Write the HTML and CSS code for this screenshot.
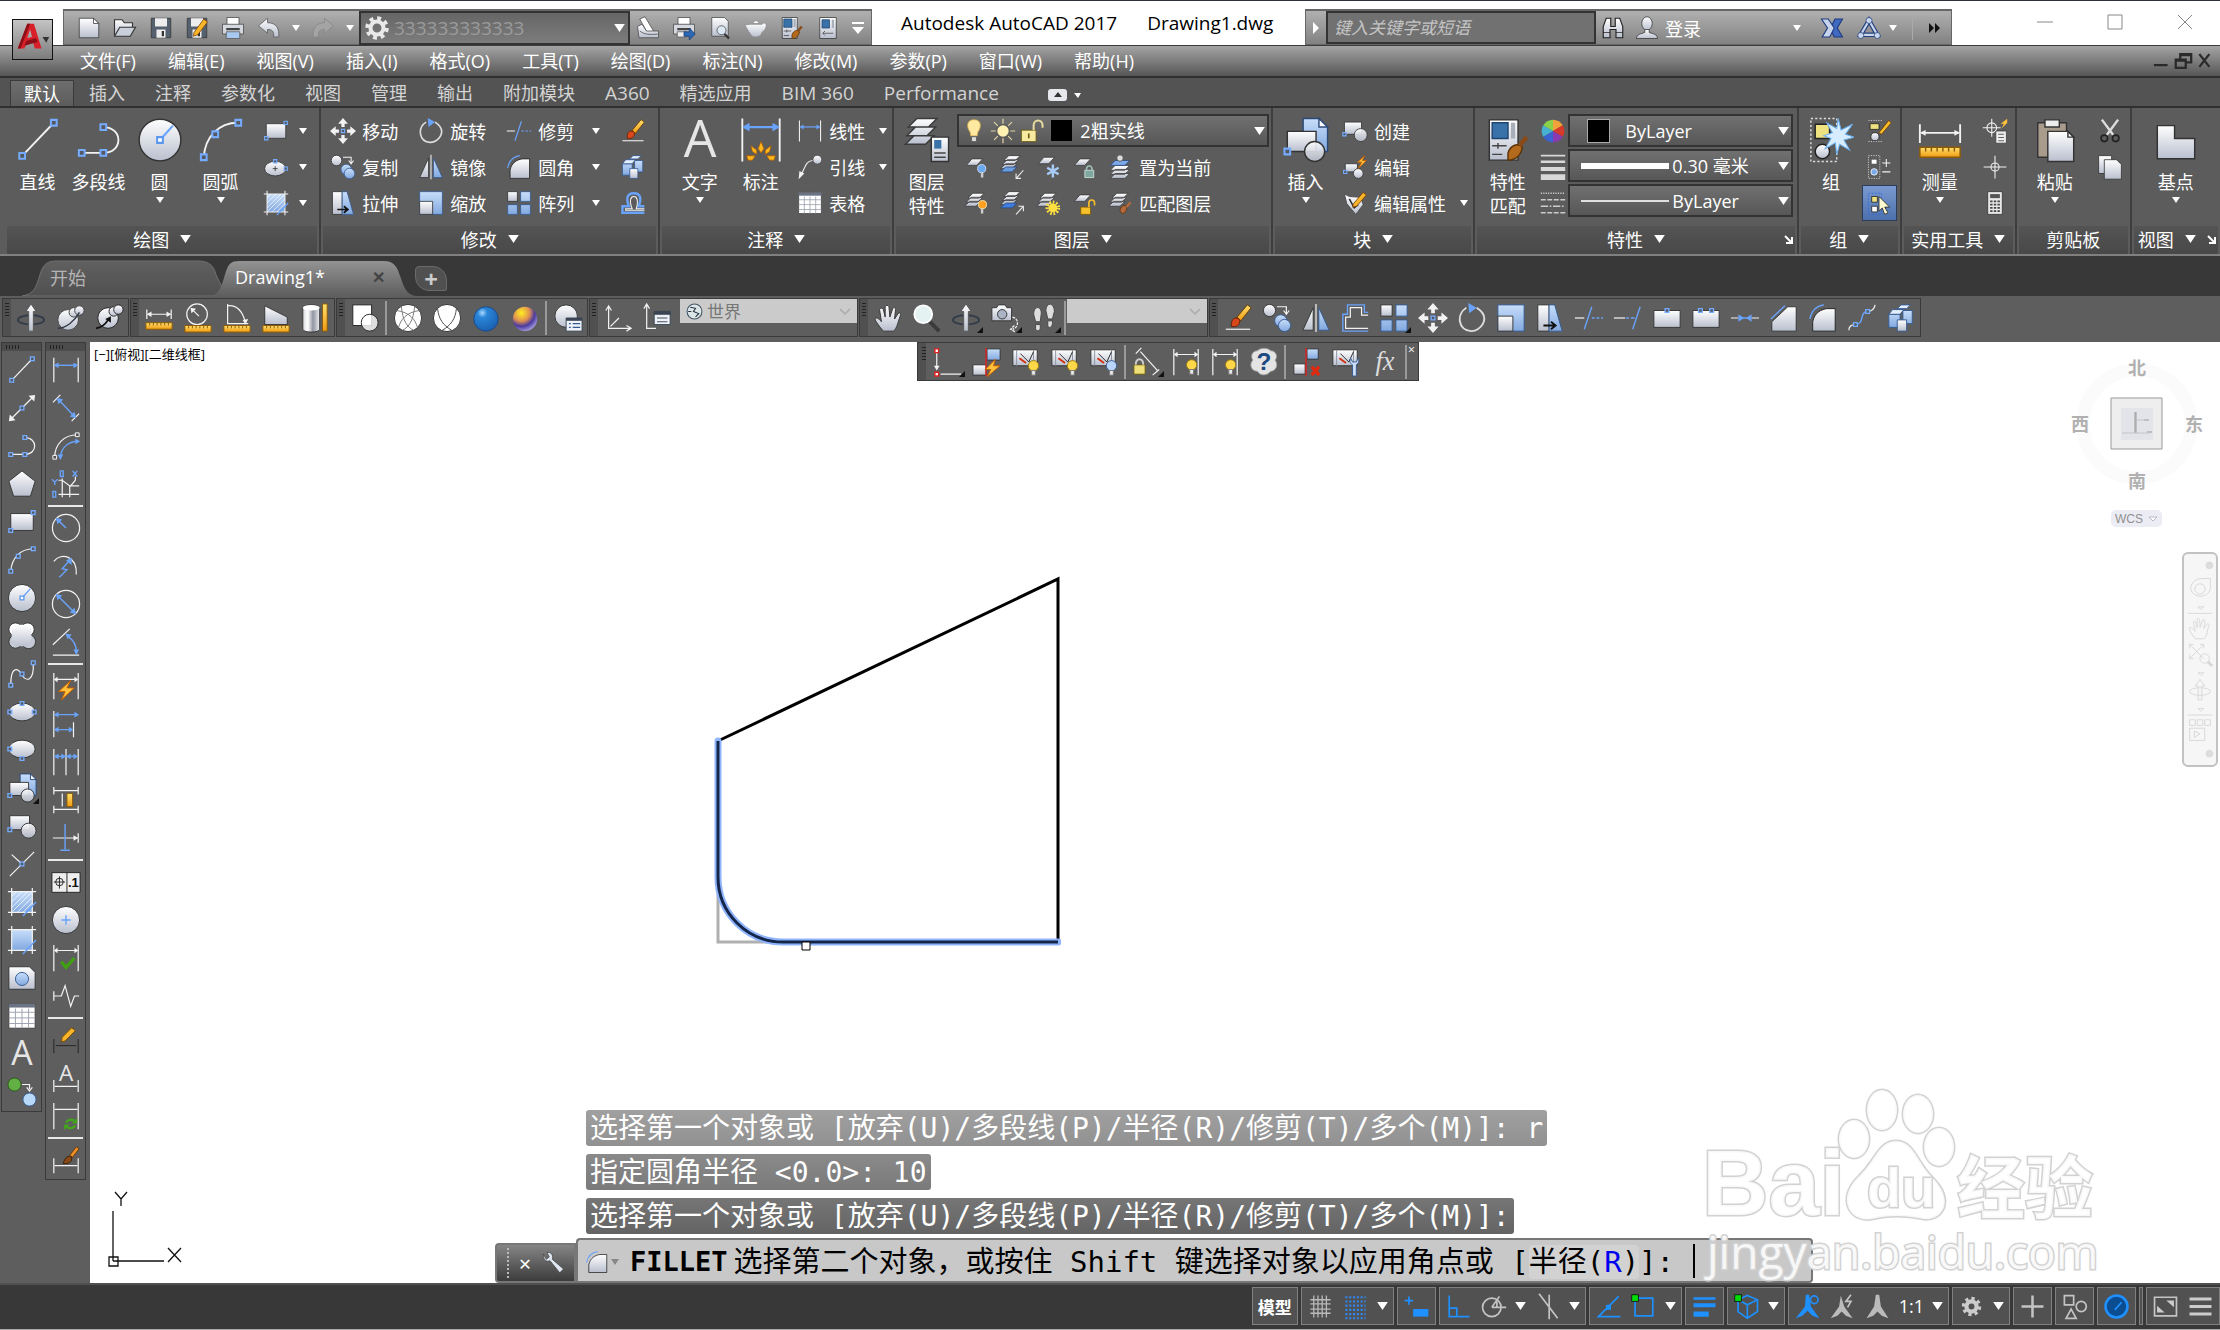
FILE: index.html
```html
<!DOCTYPE html>
<html lang="zh-CN">
<head>
  <meta charset="UTF-8" />
  <meta name="viewport" content="width=device-width, initial-scale=1.0"/>
  <title>Autodesk AutoCAD 2017 - Drawing1.dwg</title>
  <link rel="stylesheet" href="styles.css">
</head>
<body>
  <!-- icon sprite -->
  <svg class="sprite" aria-hidden="true">
    <defs>
      <linearGradient id="gw" x1="0" y1="0" x2="0" y2="1"><stop offset="0" stop-color="#fff"/><stop offset="1" stop-color="#b9bfce"/></linearGradient>
      <linearGradient id="gb" x1="0" y1="0" x2="0" y2="1"><stop offset="0" stop-color="#c8defa"/><stop offset="1" stop-color="#82a9e0"/></linearGradient>
      <linearGradient id="gy" x1="0" y1="0" x2="0" y2="1"><stop offset="0" stop-color="#ffe270"/><stop offset="1" stop-color="#f09a10"/></linearGradient>
      <linearGradient id="gc" x1="0" y1="0" x2="1" y2="0"><stop offset="0" stop-color="#d8dae0"/><stop offset=".3" stop-color="#fff"/><stop offset=".6" stop-color="#8f94a0"/><stop offset="1" stop-color="#f0f0f4"/></linearGradient>
      <radialGradient id="gball" cx=".35" cy=".25" r=".8"><stop offset="0" stop-color="#a8d8ff"/><stop offset=".25" stop-color="#2a86d8"/><stop offset="1" stop-color="#1a5fb0"/></radialGradient>
      <radialGradient id="ggold" cx=".35" cy=".25" r=".85"><stop offset="0" stop-color="#ffee20"/><stop offset=".4" stop-color="#e09050"/><stop offset=".65" stop-color="#4a3aa0"/><stop offset="1" stop-color="#c0b8f0"/></radialGradient>
      <linearGradient id="gtab" x1="0" y1="0" x2="0" y2="1"><stop offset="0" stop-color="#606060"/><stop offset="1" stop-color="#505050"/></linearGradient>
      <linearGradient id="gtabon" x1="0" y1="0" x2="0" y2="1"><stop offset="0" stop-color="#939393"/><stop offset="1" stop-color="#5e5e5e"/></linearGradient>
      <g id="hdb"><path class="w" d="M3 3v26M29 3v26"/><path class="b" d="M5 11h22"/><path class="bf" d="M3 11l5-3v6zM29 11l-5-3v6z"/></g>
      <g id="sheets"><path d="M12 4h14l-6 6H6zM10 9h14l-6 6H4zM8 14h14l-6 6H2z" fill="url(#gw)" stroke="#3a3a3a"/></g>
      <g id="ruler"><path d="M2 21h28v7H2z" fill="url(#gy)" stroke="#8c5a08"/><path d="M6 21v3M10 21v3M14 21v3M18 21v3M22 21v3M26 21v3" stroke="#8c5a08"/></g>
      <g id="bulb"><circle cx="22" cy="19" r="5.5" fill="#ffd84a" stroke="#9a7a10"/><path d="M20 24h4v5h-4z" fill="#e8e8e8" stroke="#777"/></g>
      <g id="cst"><path d="M2 3h26v17H2z" fill="url(#gw)" stroke="#333"/><path d="M6 3v17M24 3v17" stroke="#8a90a0"/><path d="M10 7l9 9 5-11" stroke="#222" fill="none"/><path d="M9 12l7 5" stroke="#d03010" stroke-width="2"/></g>
      <g id="disk"><path d="M3 3h26v26H3z" fill="#56616f" stroke="#333"/><path d="M8 3h16v11H8zM10 18h12v11H10z" fill="#eee"/><path d="M17 20h3v7h-3z" fill="#333"/></g>
      <g id="printer"><path d="M8 2h16v10H8z" fill="#fff" stroke="#444"/><path d="M2 11h28v13H2z" fill="#d5d8df" stroke="#444"/><path d="M7 16h18v3H7z" fill="#444"/></g>
    </defs>

    <symbol id="line" viewBox="0 0 32 32"><path class="w" d="M5 27L27 4"/><path class="p" d="M3 25h4v4H3zM25 2h4v4h-4z"/></symbol>
    <symbol id="xline" viewBox="0 0 32 32"><path class="w" d="M4 28L28 4"/><path class="wf" d="M2 30l1-7 6 6zM30 2l-1 7-6-6z"/><path class="p" d="M14 14h4v4h-4z"/></symbol>
    <symbol id="pline" viewBox="0 0 32 32"><path class="w" d="M5 25h14c14 0 14-18 0-18"/><path class="p" d="M2 23h4v4H2zM17 23h4v4h-4zM17 5h4v4h-4z"/></symbol>
    <symbol id="polygon" viewBox="0 0 32 32"><path d="M16 2l14 11-5 16H7L2 13z" fill="url(#gw)" stroke="#333"/></symbol>
    <symbol id="rect" viewBox="0 0 32 32"><path d="M4 7h24v18H4z" fill="url(#gw)" stroke="#333"/><path class="p" d="M26 4h4v4h-4zM2 23h4v4H2z"/></symbol>
    <symbol id="arc" viewBox="0 0 32 32"><path class="w" d="M4 28C5 14 14 4 28 4"/><path class="p" d="M2 26h4v4H2zM10 10h4v4h-4zM26 2h4v4h-4z"/></symbol>
    <symbol id="circle" viewBox="0 0 32 32"><circle cx="16" cy="16" r="14.5" fill="url(#gw)" stroke="#333"/><path class="b" d="M16 16l9-10"/><path d="M14 14h4v4h-4z" fill="#fff" stroke="#5b97f0" stroke-width="1.4"/></symbol>
    <symbol id="cloud" viewBox="0 0 32 32"><circle cx="9" cy="9" r="7" fill="#fff" stroke="#333"/><circle cx="22" cy="9" r="7" fill="#fff" stroke="#333"/><circle cx="9" cy="22" r="7" fill="#c4c9d6" stroke="#333"/><circle cx="23" cy="22" r="7.500" fill="#c4c9d6" stroke="#333"/><path d="M5 8h21v14H5zM9 4h14v23H9z" fill="url(#gw)"/></symbol>
    <symbol id="spline" viewBox="0 0 32 32"><path class="w" d="M4 28C4 6 12 10 16 17s13 8 12-13"/><path class="p" d="M2 26h4v4H2zM14 14h4v4h-4zM26 2h4v4h-4z"/></symbol>
    <symbol id="ellipse" viewBox="0 0 32 32"><ellipse cx="16" cy="16" rx="14" ry="9.500" fill="url(#gw)" stroke="#333"/><path class="p" d="M1 14h4v4H1zM27 14h4v4h-4zM14 5h4v4h-4z"/></symbol>
    <symbol id="earc" viewBox="0 0 32 32"><ellipse cx="16" cy="15" rx="14" ry="9.500" fill="url(#gw)" stroke="#333"/><path class="p" d="M1 13h4v4H1zM14 23h4v4h-4z"/></symbol>
    <symbol id="ellctr" viewBox="0 0 32 32"><ellipse cx="15" cy="18" rx="13" ry="9" fill="url(#gw)" stroke="#333"/><path d="M15 15v6M12 18h6" stroke="#333"/><path class="p" d="M13 7h4v4h-4zM26 16h4v4h-4z"/></symbol>
    <symbol id="insert" viewBox="0 0 32 32"><path d="M14 1h11l6 6v17H14z" fill="url(#gb)" stroke="#2c4a78"/><path d="M25 1v6h6z" fill="#fff" stroke="#2c4a78"/><path d="M3 10h20v14H3z" fill="url(#gw)" stroke="#333"/><circle cx="22" cy="24" r="7" fill="url(#gw)" fill-opacity=".9" stroke="#333"/><path class="p" d="M1 22h4v4H1z"/></symbol>
    <symbol id="block" viewBox="0 0 32 32"><path d="M3 5h21v15H3z" fill="url(#gw)" stroke="#333"/><circle cx="23" cy="21" r="8" fill="url(#gw)" fill-opacity=".9" stroke="#333"/><path class="p" d="M1 18h4v4H1z"/></symbol>
    <symbol id="point" viewBox="0 0 32 32"><path class="w" d="M3 29L29 3M5 6l11 10"/><path class="p" d="M14 14h4v4h-4z"/></symbol>
    <symbol id="hatch" viewBox="0 0 32 32"><path d="M5 5h22v22H5z" fill="url(#gb)"/><path d="M5 10l5-5M5 16L16 5M5 22L22 5M6 26L26 6M11 27L27 11M17 27l10-10" stroke="#fff" stroke-width=".8"/><path class="w" d="M5 1v30M27 1v30M1 5h30M1 27h30"/><path class="b" d="M17 31l14-15"/></symbol>
    <symbol id="gradient" viewBox="0 0 32 32"><path d="M5 5h22v22H5z" fill="url(#gb)"/><path class="w" d="M5 1v30M27 1v30M1 5h30M1 27h30"/><path class="b" d="M17 31l14-15"/></symbol>
    <symbol id="region" viewBox="0 0 32 32"><path d="M2 4h22l6 6v18H2z" fill="url(#gw)" stroke="#333"/><circle cx="16" cy="17" r="7" fill="url(#gb)" stroke="#345a90"/></symbol>
    <symbol id="table" viewBox="0 0 32 32"><path d="M2 3h28v26H2z" fill="#fff" stroke="#444"/><path d="M2 3h28v4H2z" fill="#6b7484"/><path d="M2 12h28M2 18h28M2 24h28M9 8v21M16 8v21M23 8v21" stroke="#9aa0ac"/></symbol>
    <symbol id="addsel" viewBox="0 0 32 32"><circle cx="8" cy="8" r="7" fill="#62b044" stroke="#275c14"/><circle cx="24" cy="24" r="7" fill="#b8d8f8" stroke="#345a90"/><path class="w" d="M16 8h8v5M21 11l3 4 3-4"/></symbol>

    <symbol id="dimlin" viewBox="0 0 32 32"><use href="#hdb"/></symbol>
    <symbol id="dimali" viewBox="0 0 32 32"><path class="w" d="M2 10l8-8M22 30l8-8"/><path class="b" d="M8 7l17 18"/><path class="bf" d="M6 5l7 2-5 5zM27 27l-7-2 5-5z"/></symbol>
    <symbol id="dimarc" viewBox="0 0 32 32"><path class="w" d="M4 28C4 14 14 4 28 4"/><path class="b" d="M10 28c1-10 8-16 18-17"/><path class="bf" d="M10 31l-3-6h6zM31 11l-5-3v6z"/><path d="M2 26h4v4H2zM26 2h4v4h-4z" fill="#555" stroke="#fff"/></symbol>
    <symbol id="dimrad" viewBox="0 0 32 32"><circle class="w" cx="16" cy="16" r="14.5"/><path class="b" d="M8 8l8 8"/><path class="bf" d="M5 5l7 2-5 5z"/></symbol>
    <symbol id="dimjog" viewBox="0 0 32 32"><path class="w" d="M3 11c8-10 25-6 24 14"/><path class="b" d="M9 28l8-8-5-1 7-8"/><path class="bf" d="M22 7l0 8-6-5z"/></symbol>
    <symbol id="dimdia" viewBox="0 0 32 32"><circle class="w" cx="16" cy="16" r="14.5"/><path class="b" d="M8 8l16 16"/><path class="bf" d="M5 5l7 2-5 5zM27 27l-7-2 5-5z"/></symbol>
    <symbol id="dimang" viewBox="0 0 32 32"><path class="w" d="M2 19L20 2M2 30h28"/><path class="b" d="M18 10c6 4 9 9 9 16"/><path class="bf" d="M15 7l7 1-4 5zM27 30l-3-6h6z"/></symbol>
    <symbol id="qdim" viewBox="0 0 32 32"><path class="w" d="M3 2v28M29 2v28M5 9h22"/><path class="wf" d="M3 9l4-3v6zM29 9l-4-3v6z"/><path d="M21 10L8 22h7l-4 9 14-13h-8z" fill="#ffc13a" stroke="#c25a00"/></symbol>
    <symbol id="dimbase" viewBox="0 0 32 32"><path class="w" d="M3 2v28M24 14v16"/><path class="b" d="M5 6h22M5 22h16"/><path class="bf" d="M3 6l5-3v6zM30 6l-5-3v6zM3 22l5-3v6zM24 22l-5-3v6z"/></symbol>
    <symbol id="dimcont" viewBox="0 0 32 32"><path class="w" d="M3 2v28M16 2v28M29 2v28"/><path class="b" d="M5 10h22"/><path class="bf" d="M3 10l5-3v6zM16 10l-5-3v6zM16 10l5-3v6zM29 10l-5-3v6z"/></symbol>
    <symbol id="dimspace" viewBox="0 0 32 32"><path class="w" d="M3 2v8M29 2v8M3 22v8M29 22v8M3 6h26M3 26h26M12 9v14"/><path d="M17 9h6v14h-6z" fill="url(#gy)" stroke="#8c5a08"/></symbol>
    <symbol id="dimbreak" viewBox="0 0 32 32"><path class="w" d="M2 16h26M29 11v10"/><path class="wf" d="M29 16l-5-3v6z"/><path class="b" d="M15 1v27M10 29h10"/></symbol>
    <symbol id="center" viewBox="0 0 32 32"><circle cx="16" cy="16" r="14.5" fill="url(#gw)" stroke="#333"/><path class="b" d="M16 11v10M11 16h10"/></symbol>
    <symbol id="inspect" viewBox="0 0 32 32"><path class="w" d="M3 2v28M29 2v28M5 8h22"/><path class="wf" d="M3 8l4-3v6zM29 8l-4-3v6z"/><path d="M11 20l5 6 9-10" fill="none" stroke="#3fa012" stroke-width="3.500"/></symbol>
    <symbol id="jogline" viewBox="0 0 32 32"><path class="w" d="M3 11v10M3 16h8l4-11 6 22 4-11h5"/></symbol>
    <symbol id="dimedit" viewBox="0 0 32 32"><path d="M3 15v15M29 15v15M5 22h22" stroke="#222"/><path d="M12 13L22 3l4 3-11 11-4 1z" fill="#f7b62a" stroke="#7a4a00"/></symbol>
    <symbol id="dimupd" viewBox="0 0 32 32"><path class="w" d="M3 2v28M29 2v28M4 9h24"/><path d="M16 23a6 5 0 0 1 9-2M26 26a6 5 0 0 1-9 2" fill="none" stroke="#43a51c" stroke-width="2.500"/><path d="M28 18v6h-6zM14 31v-6h6z" fill="#43a51c"/></symbol>
    <symbol id="dimsty" viewBox="0 0 32 32"><path class="w" d="M3 14v16M29 14v16M4 22h24"/><path d="M20 11l7-9 3 2-7 9z" fill="#f0902a" stroke="#6a3a00"/><path d="M13 20c2-8 6-9 9-7 1 5-3 7-9 7z" fill="#8a4a18" stroke="#3a2008"/></symbol>

    <symbol id="orbit" viewBox="0 0 32 32"><ellipse cx="16" cy="18" rx="14" ry="5" fill="none" stroke="#343c4a" stroke-width="2"/><path d="M13.500 30V9h-3L16 1l5.500 8h-3v21z" fill="url(#gw)" stroke="#555"/></symbol>
    <symbol id="fly" viewBox="0 0 32 32"><circle cx="14" cy="18" r="11" fill="url(#gw)" stroke="#444"/><circle cx="20" cy="10" r="5" fill="url(#gw)" stroke="#444"/><circle cx="26" cy="8" r="5" fill="url(#gw)" stroke="#444"/><path d="M3 27c9 0 18-8 23-17" fill="none" stroke="#343c4a" stroke-width="1.500"/></symbol>
    <symbol id="fly2" viewBox="0 0 32 32"><circle cx="15" cy="16" r="11" fill="url(#gw)" stroke="#222"/><circle cx="21" cy="9" r="5" fill="url(#gw)" stroke="#222"/><circle cx="26" cy="7" r="5" fill="url(#gw)" stroke="#222"/><path d="M2 27c7-1 10-4 13-9" fill="none" stroke="#111" stroke-width="2"/><path d="M18 14v7l-6-4z" fill="#111"/></symbol>
    <symbol id="mdist" viewBox="0 0 32 32"><path class="w" d="M3 7v10M29 7v10M4 12h24"/><path class="wf" d="M3 12l5-3v6zM29 12l-5-3v6z"/><use href="#ruler"/></symbol>
    <symbol id="mrad" viewBox="0 0 32 32"><circle class="w" cx="15" cy="12" r="11"/><path class="w" d="M10 7l7 7"/><path class="wf" d="M8 5l6 1-5 5z"/><use href="#ruler" y="3"/></symbol>
    <symbol id="mang" viewBox="0 0 32 32"><path class="w" d="M6 1v21h22M6 3c10-1 16 6 19 18"/><path class="wf" d="M25 23l-3-5 6-1z"/><use href="#ruler" y="3"/></symbol>
    <symbol id="marea" viewBox="0 0 32 32"><path d="M4 3l24 12v8H4z" fill="url(#gw)" stroke="#333"/><use href="#ruler" y="3"/></symbol>
    <symbol id="mvol" viewBox="0 0 32 32"><path d="M3 5c0-4 18-4 18 0v23c0 4-18 4-18 0z" fill="url(#gc)" stroke="#333"/><ellipse cx="12" cy="5" rx="9" ry="3" fill="#fff"/><path d="M24 1h5v29h-5z" fill="url(#gy)" stroke="#8c5a08"/></symbol>
    <symbol id="wire2d" viewBox="0 0 32 32"><path d="M3 2h20v22H3z" fill="#fff" stroke="#222"/><circle cx="21" cy="21" r="9" fill="#fff" fill-opacity=".8" stroke="#222"/></symbol>
    <symbol id="wire" viewBox="0 0 32 32"><circle cx="16" cy="16" r="14.500" fill="#fff" stroke="#333"/><path d="M4 8c14 2 20 10 22 18M28 8C14 10 8 18 6 26M9 4c1 14 6 22 13 25M23 4c-1 14-6 22-13 25" fill="none" stroke="#777"/></symbol>
    <symbol id="hidden" viewBox="0 0 32 32"><circle cx="16" cy="16" r="14.500" fill="#fff" stroke="#333"/><path d="M6 6c1 11 6 18 15 23M26 6c-1 11-6 18-15 23" fill="none" stroke="#444"/></symbol>
    <symbol id="real" viewBox="0 0 32 32"><circle cx="16" cy="17" r="13" fill="url(#gball)" stroke="#164a8c"/></symbol>
    <symbol id="concept" viewBox="0 0 32 32"><circle cx="16" cy="17" r="13" fill="url(#ggold)"/></symbol>
    <symbol id="vsman" viewBox="0 0 32 32"><circle cx="14" cy="14" r="12" fill="url(#gw)" stroke="#333"/><path d="M14 16h17v14H14z" fill="#eef2f8" stroke="#3a4454"/><path d="M14 16h17v3H14z" fill="#3a4454"/><path d="M17 22h2M17 26h2M21 22h8M21 26h8" stroke="#345a90" stroke-width="1.500"/></symbol>
    <symbol id="ucs" viewBox="0 0 32 32"><path class="w" d="M6 4v23h23M3 8l3-5 3 5M25 24l5 3-5 3"/><path d="M8 25l9-9" class="w"/></symbol>
    <symbol id="ucsdlg" viewBox="0 0 32 32"><path class="w" d="M5 2v25h10M2 6l3-5 3 5"/><path d="M13 9h17v14H13z" fill="#eef2f8" stroke="#3a4454"/><path d="M13 9h17v3H13zM16 16h11M16 20h11" fill="#3a4454" stroke="#3a4454"/></symbol>
    <symbol id="hand" viewBox="0 0 32 32"><path d="M11 30C6 24 3 20 2 17c1-2 4-1 7 3L7 7c1-2 3-2 4 0l2 8V4c1-2 3-2 4 0l1 11 3-9c1-2 3-1 3 1l-1 10 4-6c2-1 3 0 2 3-3 8-3 12-7 16z" fill="url(#gw)" stroke="#333"/></symbol>
    <symbol id="zoom" viewBox="0 0 32 32"><path d="M18 19l11 11" stroke="#3a3a3a" stroke-width="4"/><circle cx="12" cy="12" r="9.500" fill="#e4f2f2" stroke="#fff" stroke-width="2"/></symbol>
    <symbol id="camera" viewBox="0 0 32 32"><path d="M2 5h5l2-3h7l2 3h5v14H2z" fill="url(#gw)" stroke="#333"/><circle cx="13" cy="12" r="5" fill="#aab4c4" stroke="#333"/><path class="w" d="M24 15c8 2 6 12 0 13M26 24l-4 4 5 3" stroke-dasharray="3 1"/></symbol>
    <symbol id="foot" viewBox="0 0 32 32"><path d="M5 12c0-10 9-9 8 0l-1 8H7zM7 23h5v4c-1 4-5 3-5 0zM18 8c0-9 9-9 9 1l-2 8h-5zM20 19h5c1 8-5 9-5 4z" fill="#ddd" stroke="#444"/></symbol>
    <symbol id="erase" viewBox="0 0 32 32"><path class="w" d="M3 28h26"/><path d="M15 15L26 2l4 3-11 14z" fill="url(#gy)" stroke="#6a3a00"/><path d="M9 25c-1-9 5-11 9-7 0 6-4 8-9 7z" fill="#d8481a" stroke="#6a2000"/></symbol>
    <symbol id="copy" viewBox="0 0 32 32"><circle cx="8" cy="8" r="6.500" fill="url(#gw)" stroke="#333"/><circle cx="20" cy="19" r="6.500" fill="url(#gb)" stroke="#345a90"/><circle cx="24" cy="24" r="6.500" fill="url(#gb)" stroke="#345a90"/><path class="w" d="M16 4h10v7M23 8l3 4 3-4"/></symbol>
    <symbol id="mirror" viewBox="0 0 32 32"><path d="M13 5v24H2z" fill="url(#gw)" stroke="#333"/><path d="M19 5v24h11z" fill="url(#gb)" stroke="#345a90"/><path class="w" d="M16 1v30"/></symbol>
    <symbol id="offset" viewBox="0 0 32 32"><path class="b" d="M30 10h-4V2H8v10H3v18h27"/><path class="w" d="M30 13h-7V5H11v10H6v12h24"/></symbol>
    <symbol id="offarc" viewBox="0 0 32 32"><path d="M30 28H3v-8h8c-4-10-2-16 6-16s10 6 6 16h7" fill="none" stroke="#69a3fa" stroke-width="3"/><path class="w" d="M30 25H7v-2h8c-4-10-2-15 2-15s6 5 3 15h10"/></symbol>
    <symbol id="array" viewBox="0 0 32 32"><path d="M2 2h12v12H2z" fill="url(#gw)" stroke="#333"/><path d="M18 2h12v12H18zM2 18h12v12H2zM18 18h12v12H18z" fill="url(#gb)" stroke="#345a90"/></symbol>
    <symbol id="move" viewBox="0 0 32 32"><path class="wf" d="M16 0l6 7h-4v4h-4V7h-4zM16 32l6-7h-4v-4h-4v4h-4zM0 16l7-6v4h4v4H7v4zM32 16l-7-6v4h-4v4h4v4z"/><path class="p" d="M14 14h4v4h-4z"/></symbol>
    <symbol id="rotate" viewBox="0 0 32 32"><path d="M21 5c17 11 3 26-6 25C1 29-1 12 10 5" fill="none" stroke="#ddd" stroke-width="2"/><path class="bf" d="M12 0l9 5-8 6z"/></symbol>
    <symbol id="scale" viewBox="0 0 32 32"><path d="M2 2h28v28H2z" fill="url(#gb)" stroke="#345a90"/><path d="M2 14h16v16H2z" fill="url(#gw)" stroke="#333"/></symbol>
    <symbol id="stretch" viewBox="0 0 32 32"><path d="M3 2h12v28H3z" fill="url(#gw)" stroke="#333"/><path d="M15 2h6l8 28H15z" fill="url(#gb)" stroke="#345a90"/><path d="M9 24h12M17 20l5 4-5 4" fill="none" stroke="#111" stroke-width="2"/></symbol>
    <symbol id="trim" viewBox="0 0 32 32"><path class="w" d="M1 16h10"/><path class="b" d="M11 28l8-24M19 16h3M24 16h3M29 16h2"/></symbol>
    <symbol id="extend" viewBox="0 0 32 32"><path class="w" d="M1 16h12"/><path class="b" d="M21 28l8-24M14 16h3M19 16h4"/></symbol>
    <symbol id="breakpt" viewBox="0 0 32 32"><path d="M2 8h28v18H2z" fill="url(#gw)" stroke="#333"/><path class="p" d="M14 6h4v4h-4z"/></symbol>
    <symbol id="break" viewBox="0 0 32 32"><path d="M2 8h28v18H2z" fill="url(#gw)" stroke="#333"/><path class="p" d="M8 6h4v4H8zM20 6h4v4h-4z"/></symbol>
    <symbol id="join" viewBox="0 0 32 32"><path class="w" d="M1 16h8M23 16h8"/><path class="b" d="M11 16h10"/><path class="bf" d="M15 16l-6-4v8zM17 16l6-4v8z"/></symbol>
    <symbol id="chamfer" viewBox="0 0 32 32"><path d="M3 30V20L20 4h9v26z" fill="url(#gw)" stroke="#333"/><path class="b" d="M2 17L17 3"/></symbol>
    <symbol id="fillet" viewBox="0 0 32 32"><path d="M5 30V20C7 10 14 7 20 6h9v24z" fill="url(#gw)" stroke="#222"/><path class="b" d="M2 17C4 7 10 3 17 2"/></symbol>
    <symbol id="blend" viewBox="0 0 32 32"><path class="w" d="M2 29c0-4 3-6 7-6M22 9c4 0 7-2 8-7"/><path class="b" d="M9 23c10 0 4-14 13-14"/><path class="p" d="M7 21h4v4H7zM20 7h4v4h-4z"/></symbol>
    <symbol id="explode" viewBox="0 0 32 32"><path d="M3 12h12v14H3zM18 8h10v14H18z" fill="url(#gb)" stroke="#345a90"/><path d="M3 12l4-5h12l-4 5zM12 6l4-4h10l-4 4z" fill="#e4eefc" stroke="#345a90"/><path d="M12 18h10v12H12z" fill="url(#gw)" stroke="#345a90"/></symbol>

    <symbol id="geo" viewBox="0 0 32 32"><path class="w" d="M4 5v18M8 29h22"/><path class="wf" d="M4 25l-3-5h6z"/><path d="M2 2h4v4H2zM2 27h4v4H2z" fill="#fff" stroke="#e02020" stroke-width="1.500"/></symbol>
    <symbol id="autoc" viewBox="0 0 32 32"><path d="M16 2h14v12H16z" fill="url(#gb)" stroke="#333"/><path d="M1 19h14v11H1z" fill="url(#gw)" stroke="#333"/><path d="M15 1v30" stroke="#e02020" stroke-width="1.500"/><path d="M25 13L14 24h6l-4 8 14-12h-7z" fill="#ffc13a" stroke="#c25a00"/></symbol>
    <symbol id="cshow" viewBox="0 0 32 32"><use href="#cst"/><use href="#bulb" x="2" y="1"/></symbol>
    <symbol id="chide" viewBox="0 0 32 32"><use href="#cst"/><circle cx="24" cy="20" r="5.500" fill="#b8d4f8" stroke="#3a5a90"/><path d="M22 25h4v5h-4z" fill="#e8e8e8" stroke="#777"/></symbol>
    <symbol id="dlock" viewBox="0 0 32 32"><path class="w" d="M4 7l6-6M9 5l18 20M22 30l7-6"/><path d="M2 19h12v10H2z" fill="#efe07a" stroke="#6a5a10"/><path d="M4 19c0-8 8-8 8 0" fill="none" stroke="#ccc" stroke-width="2"/></symbol>
    <symbol id="dshow" viewBox="0 0 32 32"><path class="w" d="M3 2v28M29 2v28M5 8h22"/><path class="wf" d="M3 8l4-3v6zM29 8l-4-3v6z"/><use href="#bulb"/></symbol>
    <symbol id="delc" viewBox="0 0 32 32"><path d="M16 2h12v11H16z" fill="url(#gb)" stroke="#333"/><path d="M2 18h12v11H2z" fill="url(#gw)" stroke="#333"/><path d="M15 1v30" stroke="#e02020" stroke-width="1.500"/><path d="M21 21l8 9M29 21l-8 9" stroke="#e02a10" stroke-width="3.500"/></symbol>
    <symbol id="cset" viewBox="0 0 32 32"><use href="#cst"/><path d="M21 12c-2 4 0 6 2 7v12h4V19c3-2 3-5 2-7l-2 4h-4z" fill="#cfe0fa" stroke="#345a90"/></symbol>

    <symbol id="new" viewBox="0 0 32 32"><path d="M3 3h19l7 7v19H3z" fill="url(#gw)" stroke="#333"/><path d="M22 3v7h7z" fill="#fff" stroke="#333"/></symbol>
    <symbol id="open" viewBox="0 0 32 32"><path d="M2 26V5h10l3 4h11v6" fill="url(#gw)" stroke="#333" stroke-width="1.500"/><path d="M2 27l7-12h21l-7 12z" fill="#c9d0dc" stroke="#333" stroke-width="1.500"/></symbol>
    <symbol id="save" viewBox="0 0 32 32"><use href="#disk"/></symbol>
    <symbol id="saveas" viewBox="0 0 32 32"><use href="#disk"/><path d="M12 22L25 4l5 4-13 17-6 2z" fill="#f7b62a" stroke="#7a3a00"/></symbol>
    <symbol id="print" viewBox="0 0 32 32"><use href="#printer"/><path d="M7 21h18v9H7z" fill="#a9c8f0" stroke="#555"/></symbol>
    <symbol id="undo" viewBox="0 0 32 32"><path d="M2 13L14 3v6c12 0 16 8 15 19h-7c1-8-2-10-8-10v5z" fill="url(#gw)" stroke="#555"/></symbol>
    <symbol id="redo" viewBox="0 0 32 32"><path d="M30 13L18 3v6C6 9 2 17 3 28h7c-1-8 2-10 8-10v5z" fill="#a4a4a4" stroke="#848484"/></symbol>
    <symbol id="gear" viewBox="0 0 32 32"><circle cx="16" cy="16" r="12" fill="none" stroke="#e8e8e8" stroke-width="5" stroke-dasharray="4.700 4.700"/><circle cx="16" cy="16" r="8" fill="none" stroke="#e8e8e8" stroke-width="5"/></symbol>
    <symbol id="batch" viewBox="0 0 32 32"><path d="M5 4l7-3 12 20-8 3z" fill="#fff" stroke="#444"/><path d="M2 14l6-3 6 9h16v9H4z" fill="url(#gw)" stroke="#444"/><path d="M5 20c6 5 14 5 24 4" fill="none" stroke="#444"/></symbol>
    <symbol id="plot" viewBox="0 0 32 32"><use href="#printer"/><path d="M7 21h12v7H7z" fill="#eee" stroke="#555"/><path d="M16 21h7v-5l8 8-8 8v-5h-7z" fill="#2c68b4" stroke="#173c70"/></symbol>
    <symbol id="preview" viewBox="0 0 32 32"><path d="M5 2h17l5 5v20H5z" fill="url(#gw)" stroke="#444"/><path d="M22 24l6 6" stroke="#333" stroke-width="3"/><circle cx="18" cy="19" r="6" fill="#dce8f4" stroke="#444"/></symbol>
    <symbol id="teapot" viewBox="0 0 32 32"><path d="M8 11h16c4-4 8 0 4 7l-4 4c-2 8-14 8-16 1C5 20 4 16 1 12z" fill="url(#gw)" stroke="#888"/><path d="M12 10c1-5 7-5 8 0z" fill="#fff" stroke="#888"/></symbol>
    <symbol id="props" viewBox="0 0 32 32"><path d="M3 2h20v28H3z" fill="url(#gw)" stroke="#333"/><path d="M5 4h11v11H5z" fill="#3972a8" stroke="#1f4470"/><path d="M18 4h3v11h-3z" fill="#a9afba"/><path d="M5 20h10M5 26h7M9 18v4" stroke="#444"/><path d="M16 25c2-6 7-7 10-4-1 6-5 9-10 9z" fill="#b46a1c" stroke="#5a3208"/><path d="M24 20l5-6" stroke="#8a4a18" stroke-width="3"/></symbol>
    <symbol id="palette" viewBox="0 0 32 32"><path d="M5 2h22v28H5z" fill="url(#gw)" stroke="#333"/><path d="M8 5h10v11H8z" fill="#3972a8" stroke="#1f4470"/><path d="M21 5h3v11h-3z" fill="#a9afba"/><path d="M9 23h14M12 20l-3 3 3 3" stroke="#444" fill="none"/></symbol>
    <symbol id="down" viewBox="0 0 8 6"><path d="M0 0h8L4 6z" fill="currentColor"/></symbol>
    <symbol id="binoc" viewBox="0 0 32 32"><path d="M3 29V14L7 3h6v11h6V3h6l4 11v15h-9V18h-8v11z" fill="url(#gw)" stroke="#222" stroke-width="1.500"/><path d="M3 22h9M20 22h9" stroke="#222"/></symbol>
    <symbol id="user" viewBox="0 0 32 32"><ellipse cx="16" cy="10" rx="7" ry="9" fill="url(#gw)" stroke="#333"/><path d="M2 30c0-6 6-6 11-8v-4h6v4c5 2 11 2 11 8z" fill="url(#gw)" stroke="#333"/></symbol>
    <symbol id="exch" viewBox="0 0 32 32"><path d="M16 12l4-8h10l-7 12 7 12H19l-4-8z" fill="#3f6ac0" stroke="#1f3a80" stroke-width="1.500"/><path d="M2 4h9l8 12-6 12H3l7-12z" fill="#c8d4ec" stroke="#1f3a80" stroke-width="1.500"/></symbol>
    <symbol id="a360" viewBox="0 0 32 32"><path d="M16 6L5 25h22z" fill="none" stroke="#25407c" stroke-width="6"/><path d="M16 6L5 25h22z" fill="none" stroke="#c8d6ee" stroke-width="3"/><circle cx="16" cy="6" r="4" fill="#c8d6ee" stroke="#25407c"/><circle cx="5" cy="26" r="4" fill="#c8d6ee" stroke="#25407c"/><circle cx="27" cy="26" r="4" fill="#c8d6ee" stroke="#25407c"/></symbol>

    <symbol id="dimbig" viewBox="0 0 32 32"><path class="w" d="M3 1v30M29 1v30"/><path class="b" d="M4 7h24"/><path class="bf" d="M3 7l5-3v6zM29 7l-5-3v6z"/><path d="M16 17l2 5-2 3-2-3zM9 20l4 3v3l-3-2zM23 20l-4 3v3l3-2zM6 27h6l-2 3H7zM26 27h-6l2 3h3z" fill="#ffb81c" stroke="#b05a00" stroke-width=".5"/></symbol>
    <symbol id="leader" viewBox="0 0 32 32"><circle cx="25" cy="7" r="5.500" fill="url(#gw)" stroke="#444"/><path class="w" d="M19 8c-8 1-8 6-14 18"/><path class="wf" d="M2 31l1-10 6 3z"/></symbol>
    <symbol id="layprop" viewBox="0 0 32 32"><path d="M9 1h14l-6 6H3zM8 7h14l-6 6H2zM7 13h14l-6 6H1z" fill="url(#gw)" stroke="#3a3a3a"/><path d="M19 14h12v17H19z" fill="url(#gw)" stroke="#333"/><path d="M21 16h5v6h-5z" fill="#3972a8"/><path d="M21 25h8M21 28h8" stroke="#444"/></symbol>
    <symbol id="layoff" viewBox="0 0 32 32"><path d="M11 6h13l-7 8H4z" fill="url(#gw)" stroke="#3a3a3a"/><circle cx="23" cy="18" r="5" fill="#6aa8f0" stroke="#dbe8fa"/><path d="M22 23h3v6h-3z" fill="#ccc"/></symbol>
    <symbol id="layiso" viewBox="0 0 32 32"><use href="#sheets" y="-2"/><path d="M8 16h14l-6 6H2z" fill="#6a9ce0" stroke="#2c4a78"/><path class="w" d="M30 20l-8 9M21 24v6h6"/></symbol>
    <symbol id="layuniso" viewBox="0 0 32 32"><use href="#sheets" y="-2"/><path d="M8 16h14l-6 6H2z" fill="#3f7ee0" stroke="#2c4a78"/><path class="w" d="M21 30l8-9M24 20h6v6"/></symbol>
    <symbol id="layfrz" viewBox="0 0 32 32"><path d="M11 4h13l-7 8H4z" fill="url(#gw)" stroke="#3a3a3a"/><path d="M22 13v16M15 17l14 8M29 17l-14 8" stroke="#a8ccf8" stroke-width="3"/></symbol>
    <symbol id="laylck" viewBox="0 0 32 32"><path d="M11 6h13l-7 8H4z" fill="url(#gw)" stroke="#3a3a3a"/><path d="M17 20h11v9H17z" fill="#7ea8a0" stroke="#d8e8e4"/><path d="M19 20c0-7 7-7 7 0" fill="none" stroke="#9cc0b8" stroke-width="2"/></symbol>
    <symbol id="laycur" viewBox="0 0 32 32"><path d="M10 24h18l-6 6H4zM10 19h18l-6 6H4zM10 14h18l-6 6H4z" fill="url(#gw)" stroke="#3a3a3a"/><path d="M10 8h18l-6 6H4z" fill="#7aa8e8" stroke="#2c4a78"/><circle cx="16" cy="5" r="4" fill="#ddd" stroke="#444"/></symbol>
    <symbol id="layon" viewBox="0 0 32 32"><use href="#sheets"/><circle cx="24" cy="18" r="5" fill="#ffa020" stroke="#fff0c0"/><path d="M22 23h3v6h-3z" fill="#ccc"/></symbol>
    <symbol id="laythw" viewBox="0 0 32 32"><use href="#sheets"/><circle cx="22" cy="22" r="7" fill="none" stroke="#ffe040" stroke-width="4" stroke-dasharray="2 2"/><circle cx="22" cy="22" r="5.500" fill="#ffe040"/></symbol>
    <symbol id="layunl" viewBox="0 0 32 32"><path d="M11 6h13l-7 8H4z" fill="url(#gw)" stroke="#3a3a3a"/><path d="M12 21h12v9H12z" fill="#f7c02a" stroke="#7a5a00"/><path d="M22 21v-5c0-5 7-5 7 0v3" fill="none" stroke="#f7c02a" stroke-width="2"/></symbol>
    <symbol id="laymat" viewBox="0 0 32 32"><use href="#sheets"/><path d="M16 26c0-6 5-8 8-6 1 5-2 9-5 9z" fill="#b46a3c" stroke="#5a3208"/><path d="M24 21l5-6" stroke="#b46a3c" stroke-width="3"/></symbol>
    <symbol id="bulbon" viewBox="0 0 32 32"><path d="M16 2c10 0 9 10 5 15l-1 5h-8l-1-5C7 12 6 2 16 2z" fill="#ffe9a0" stroke="#caa24a"/><path d="M13 23h6v6h-6z" fill="#ddd" stroke="#555"/></symbol>
    <symbol id="sun" viewBox="0 0 32 32"><path d="M16 1v30M1 16h30M5 5l22 22M27 5L5 27" stroke="#e0d4a8" stroke-width="1.500"/><circle cx="16" cy="16" r="9" fill="#5a5a5a"/><circle cx="16" cy="16" r="7" fill="#fdf0b0"/></symbol>
    <symbol id="unlock" viewBox="0 0 32 32"><path d="M3 15h18v14H3z" fill="#f5eaa0" stroke="#6a5a10"/><path d="M12 19v6" stroke="#6a5a10" stroke-width="2"/><path d="M18 15V9c0-8 11-8 11 0v3" fill="none" stroke="#e8dca0" stroke-width="2.500"/></symbol>
    <symbol id="bedit" viewBox="0 0 32 32"><path d="M4 12h15v10H4z" fill="url(#gw)" stroke="#333"/><circle cx="20" cy="24" r="6" fill="url(#gw)" stroke="#333"/><path d="M28 2l-9 8h5l-4 8 10-10h-5z" fill="#ffc13a" stroke="#c25a00"/><path class="p" d="M2 20h4v4H2z"/></symbol>
    <symbol id="battr" viewBox="0 0 32 32"><path d="M3 5l3 12 11 13 9-12-3-9-14-1z" fill="url(#gw)" stroke="#444"/><path d="M9 11l6 11 5-4" fill="none" stroke="#333" stroke-width="2"/><path d="M14 17L26 3l4 3-12 14-5 1z" fill="#f7b62a" stroke="#7a3a00"/></symbol>
    <symbol id="wheel" viewBox="0 0 32 32"><path d="M16 16V2a14 14 0 0 1 12 7z" fill="#f2a23a"/><path d="M16 16L28 9a14 14 0 0 1 0 14z" fill="#d83a2a"/><path d="M16 16l12 7a14 14 0 0 1-12 7z" fill="#8a3ab0"/><path d="M16 16v14a14 14 0 0 1-12-7z" fill="#3a62d0"/><path d="M16 16L4 23A14 14 0 0 1 4 9z" fill="#48b0d0"/><path d="M16 16L4 9a14 14 0 0 1 12-7z" fill="#8ad04a"/></symbol>
    <symbol id="lwt" viewBox="0 0 32 32"><path d="M1 1h30v2H1zM1 8h30v3H1zM1 16h30v5H1zM1 25h30v7H1z" fill="#d8d8d8"/></symbol>
    <symbol id="ltype" viewBox="0 0 32 32"><path d="M1 4h30" stroke="#ccc" stroke-width="2" stroke-dasharray="1.500 1.500"/><path d="M1 12h30M1 28h30" stroke="#ccc" stroke-width="2" stroke-dasharray="6 2"/><path d="M1 20h30" stroke="#ccc" stroke-width="2" stroke-dasharray="9 2 2 2"/></symbol>
    <symbol id="group" viewBox="0 0 32 32"><path d="M2 1h18v30H2z" fill="none" stroke="#ddd" stroke-dasharray="1.500 1.500"/><path d="M5 5h10v10H5z" fill="#efe280" stroke="#222"/><circle cx="10" cy="24" r="5" fill="url(#gw)" stroke="#222"/><path d="M21 1l2 8 8-4-5 7 6 2-7 2 4 7-7-4-2 7-1-8-7 4 4-7-5-2 6-2-4-7 7 4z" fill="#d8ecff" stroke="#6ab0f0" stroke-width=".7"/></symbol>
    <symbol id="gedit" viewBox="0 0 32 32"><path d="M3 3h18M3 29h18" stroke="#ddd" stroke-dasharray="1.500 1.500"/><path d="M5 7h11v7H5z" fill="#efe280" stroke="#222"/><circle cx="11" cy="23" r="5" fill="url(#gw)" stroke="#222"/><path d="M16 18L28 3l3 3-12 14z" fill="#f7c02a" stroke="#7a3a00"/></symbol>
    <symbol id="gaddrem" viewBox="0 0 32 32"><path d="M3 2h14v28H3z" fill="none" stroke="#ddd" stroke-dasharray="1.500 1.500"/><path d="M7 7h6v5H7z" fill="#fff"/><circle cx="10" cy="22" r="4" fill="#7aa8e8" stroke="#fff"/><path class="w" d="M25 6v10M20 11h10M20 22h10"/></symbol>
    <symbol id="gsel" viewBox="0 0 32 32"><path d="M3 4h16v26H3z" fill="none" stroke="#2c68e0" stroke-dasharray="2 2"/><path d="M7 8h7v7H7z" fill="#efe280" stroke="#222"/><path d="M7 20h7v7H7z" fill="#fff" stroke="#222"/><path d="M16 8l13 13h-6l4 7-4 2-3-8-4 4z" fill="#fffbd0" stroke="#222"/></symbol>
    <symbol id="measure" viewBox="0 0 32 32"><path class="w" d="M2 5v13M30 5v13M3 11h26"/><path class="wf" d="M2 11l4-2v4zM30 11l-4-2v4z"/><use href="#ruler"/></symbol>
    <symbol id="qcalc" viewBox="0 0 32 32"><path class="w" d="M12 1v22M1 12h22"/><circle class="w" cx="12" cy="12" r="6"/><path d="M31 1l-8 6h4l-3 6 7-7z" fill="#ffc13a"/><path d="M17 16h13v15H17z" fill="#eee" stroke="#444"/><path d="M20 20h7M20 24h7M20 28h7" stroke="#444"/></symbol>
    <symbol id="pid" viewBox="0 0 32 32"><path class="w" d="M16 2v28M2 16h28"/><circle class="w" cx="16" cy="16" r="5"/></symbol>
    <symbol id="calc" viewBox="0 0 32 32"><path d="M7 2h18v28H7z" fill="#e8e8e8" stroke="#333"/><path d="M10 5h12v5H10z" fill="#555"/><path d="M10 14h12M10 18h12M10 22h12M10 26h12" stroke="#444" stroke-width="2" stroke-dasharray="3 1.500"/></symbol>
    <symbol id="paste" viewBox="0 0 32 32"><path d="M4 4h20v24H4z" fill="#a99c8c" stroke="#333"/><path d="M9 2h10v5H9z" fill="#eee" stroke="#333"/><path d="M11 10h14l4 4v17H11z" fill="url(#gw)" stroke="#333"/><path d="M25 10v4h4z" fill="#fff" stroke="#333"/></symbol>
    <symbol id="cut" viewBox="0 0 32 32"><path d="M6 2l14 19M26 2L12 21" stroke="#ddd" stroke-width="3"/><circle cx="9" cy="25" r="4" fill="none" stroke="#222" stroke-width="2"/><circle cx="23" cy="25" r="4" fill="none" stroke="#222" stroke-width="2"/></symbol>
    <symbol id="copyclip" viewBox="0 0 32 32"><path d="M2 2h16v22H2z" fill="url(#gw)" stroke="#333"/><path d="M9 7h15l6 6v18H9z" fill="url(#gw)" stroke="#333"/></symbol>
    <symbol id="base" viewBox="0 0 32 32"><path d="M3 6h12v9h14v14H3z" fill="url(#gw)" stroke="#333"/></symbol>

    <symbol id="grid" viewBox="0 0 32 32"><path d="M8 3v26M13 3v26M18 3v26M23 3v26M4 8h24M4 13h24M4 19h24M4 24h24" stroke="#bbb" stroke-width="1.500"/></symbol>
    <symbol id="snap" viewBox="0 0 32 32"><path d="M4 5h24M4 10h24M4 15h24M4 20h24M4 25h24M4 30h24" stroke="#2f86f0" stroke-width="2.500" stroke-dasharray="2.500 2"/></symbol>
    <symbol id="dyn" viewBox="0 0 32 32"><path class="s" d="M7 4v10M2 9h10"/><path d="M12 19h18v9H12z" fill="#1e90ff"/></symbol>
    <symbol id="ortho" viewBox="0 0 32 32"><path class="s" d="M5 3v25h24M5 18h9v10"/></symbol>
    <symbol id="polar" viewBox="0 0 32 32"><circle cx="14" cy="17" r="11" class="sg"/><path class="sg" d="M14 17h17M14 17l9-13M20 10v7"/></symbol>
    <symbol id="iso" viewBox="0 0 32 32"><path class="sg" d="M6 1l22 29M18 2v29"/></symbol>
    <symbol id="otrack" viewBox="0 0 32 32"><path class="s" d="M28 4L4 28h26"/><path d="M13 14h6v6h-6z" fill="#1e90ff"/></symbol>
    <symbol id="osnap" viewBox="0 0 32 32"><path class="s" d="M6 6h21v21H6z"/><path d="M2 2h8v8H2z" fill="#0d0" stroke="#111"/></symbol>
    <symbol id="lwd" viewBox="0 0 32 32"><path d="M3 5h26v3H3zM3 12h26v5H3zM3 22h18v6H3z" fill="#1e90ff"/></symbol>
    <symbol id="cube3" viewBox="0 0 32 32"><path class="s" d="M17 3l12 5v14l-12 8-11-8V8zM6 8l11 6 12-6M17 14v16"/><path d="M2 2h8v8H2z" fill="#0d0" stroke="#111"/></symbol>
    <symbol id="anno" viewBox="0 0 32 32"><path d="M14 2h4l2 14 10 14-8-3-6-6-6 6-8 3 11-14z" fill="#1e90ff"/><circle cx="24" cy="8" r="4.500" class="s"/></symbol>
    <symbol id="annob" viewBox="0 0 32 32"><path d="M14 3l4 13 10 14-8-3-5-5-5 5-8 3 10-14z" fill="#bbb"/><path d="M26 2l-6 8h6l-4 7" class="sg"/></symbol>
    <symbol id="annoc" viewBox="0 0 32 32"><path d="M14 2h4l2 14 9 14-8-3-5-5-5 5-8 3 9-14z" fill="#bbb"/></symbol>
    <symbol id="plus" viewBox="0 0 32 32"><path d="M16 3v26M3 16h26" stroke="#c4c4c4" stroke-width="3"/></symbol>
    <symbol id="shapes" viewBox="0 0 32 32"><path class="sg" d="M4 3h11v11H4zM12 19l6 11H6z"/><circle cx="24" cy="16" r="6" class="sg"/></symbol>
    <symbol id="perf" viewBox="0 0 32 32"><circle cx="16" cy="16" r="13" fill="#0c4c90" stroke="#1e90ff" stroke-width="3"/><path class="s" d="M14 20l8-9"/></symbol>
    <symbol id="full" viewBox="0 0 32 32"><path class="sg" d="M3 5h26v22H3z"/><path d="M17 9h9v8zM6 15v8h9z" fill="#ccc"/></symbol>
    <symbol id="burger" viewBox="0 0 32 32"><path d="M3 7h26M3 16h26M3 25h26" stroke="#ccc" stroke-width="3.500"/></symbol>
    <symbol id="sgear" viewBox="0 0 32 32"><circle cx="16" cy="16" r="9.500" fill="none" stroke="#ccc" stroke-width="4" stroke-dasharray="3.700 3.700"/><circle cx="16" cy="16" r="6" fill="none" stroke="#ccc" stroke-width="5"/></symbol>
    <symbol id="wrench" viewBox="0 0 32 32"><path d="M3 4c0 8 4 11 9 9l13 16 5-5-15-13c2-6-2-10-7-9l3 6-4 3z" fill="#dfe6f0" stroke="#444"/></symbol>
  </svg>

  <div class="app">
    <header class="titlebar">
      <button class="app-btn" aria-label="应用程序菜单">
        <svg viewBox="0 0 41 41"><path d="M5 30L15 4h7l8 26h-7l-2-7-7 2-2 5zM15 19l5-1-2-8z" fill="#d8202a"/><path d="M15 4h3L8 30H5zM14 22l10-3 2 4-14 4z" fill="#8c0f18"/><path d="M31 18h7l-3 6z" fill="#333"/></svg>
      </button>
      <div class="qat">
        <button aria-label="新建"><svg><use href="#new"/></svg></button>
        <button aria-label="打开"><svg><use href="#open"/></svg></button>
        <button aria-label="保存"><svg><use href="#save"/></svg></button>
        <button aria-label="另存为"><svg><use href="#saveas"/></svg></button>
        <button aria-label="打印"><svg><use href="#print"/></svg></button>
        <button aria-label="放弃"><svg><use href="#undo"/></svg></button>
        <button class="nar" aria-label="放弃列表"><svg class="dn"><use href="#down"/></svg></button>
        <button aria-label="重做"><svg><use href="#redo"/></svg></button>
        <button class="nar" aria-label="重做列表"><svg class="dn"><use href="#down"/></svg></button>
        <div class="ws">
          <svg class="ic"><use href="#gear"/></svg>
          <select aria-label="工作空间"><option>333333333333</option></select>
          <svg class="dn lg"><use href="#down"/></svg>
        </div>
        <button aria-label="批处理"><svg><use href="#batch"/></svg></button>
        <button aria-label="发布"><svg><use href="#plot"/></svg></button>
        <button aria-label="预览"><svg><use href="#preview"/></svg></button>
        <button aria-label="渲染"><svg><use href="#teapot"/></svg></button>
        <button aria-label="特性匹配"><svg><use href="#props"/></svg></button>
        <button aria-label="特性"><svg><use href="#palette"/></svg></button>
        <button class="more" aria-label="自定义"><svg viewBox="0 0 12 12"><path d="M0 0h12v2H0zM0 5h12l-6 7z" fill="#fff"/></svg></button>
      </div>
      <div class="caption"><span>Autodesk AutoCAD 2017</span><span>Drawing1.dwg</span></div>
      <div class="info">
        <button class="nar" aria-label="展开"><svg class="ra" viewBox="0 0 6 12"><path d="M0 0l6 6-6 6z" fill="#fff"/></svg></button>
        <input type="text" placeholder="键入关键字或短语" aria-label="搜索">
        <button aria-label="查找"><svg><use href="#binoc"/></svg></button>
        <button class="login"><svg><use href="#user"/></svg>登录<svg class="dn"><use href="#down"/></svg></button>
        <button aria-label="Exchange"><svg><use href="#exch"/></svg></button>
        <button class="a360" aria-label="A360"><svg><use href="#a360"/></svg><svg class="dn"><use href="#down"/></svg></button>
        <button class="chev" aria-label="更多"><svg viewBox="0 0 12 12"><path d="M0 1l5 5-5 5zM6 1l5 5-5 5z" fill="#111"/></svg></button>
      </div>
      <div class="winctl">
        <button aria-label="最小化"><svg viewBox="0 0 16 16"><path d="M0 8h16"/></svg></button>
        <button aria-label="最大化"><svg viewBox="0 0 16 16"><path d="M1 1h14v14H1z"/></svg></button>
        <button aria-label="关闭"><svg viewBox="0 0 16 16"><path d="M1 1l14 14M15 1L1 15"/></svg></button>
      </div>
    </header>

    <nav class="menubar">
      <button>文件(F)</button><button>编辑(E)</button><button>视图(V)</button><button>插入(I)</button><button>格式(O)</button><button>工具(T)</button><button>绘图(D)</button><button>标注(N)</button><button>修改(M)</button><button>参数(P)</button><button>窗口(W)</button><button>帮助(H)</button>
      <svg class="mdi" viewBox="0 0 66 18"><path d="M1 14h15M25 8h11v9H25zM25 9h11M30 8V2h12v9h-5M30 3h12M51 2l11 14M62 2L51 16"/></svg>
    </nav>

    <nav class="tabs">
      <button class="on">默认</button><button>插入</button><button>注释</button><button>参数化</button><button>视图</button><button>管理</button><button>输出</button><button>附加模块</button><button class="lat">A360</button><button>精选应用</button><button class="lat">BIM 360</button><button class="lat">Performance</button>
      <button class="min" aria-label="最小化功能区"><svg viewBox="0 0 34 14"><rect x="1" y="1" width="19" height="12" rx="3" fill="#e6e8ee"/><path d="M7 9h8l-4-5z" fill="#333"/><path d="M27 5h7l-3 5z" fill="#fff"/></svg></button>
    </nav>

    <section class="ribbon">
      <div class="panel p-draw">
        <div class="body">
          <button class="big"><svg><use href="#line"/></svg>直线</button>
          <button class="big"><svg><use href="#pline"/></svg>多段线</button>
          <button class="big"><svg><use href="#circle"/></svg>圆<svg class="dn"><use href="#down"/></svg></button>
          <button class="big"><svg><use href="#arc"/></svg>圆弧<svg class="dn"><use href="#down"/></svg></button>
          <div class="rows">
            <button class="sm" aria-label="矩形"><svg><use href="#rect"/></svg><svg class="dn"><use href="#down"/></svg></button>
            <button class="sm" aria-label="椭圆"><svg><use href="#ellctr"/></svg><svg class="dn"><use href="#down"/></svg></button>
            <button class="sm" aria-label="图案填充"><svg><use href="#hatch"/></svg><svg class="dn"><use href="#down"/></svg></button>
          </div>
        </div>
        <div class="foot">绘图<svg class="dn lg"><use href="#down"/></svg></div>
      </div>
      <div class="panel p-mod">
        <div class="body modify">
          <button class="sm"><svg><use href="#move"/></svg>移动</button>
          <button class="sm"><svg><use href="#rotate"/></svg>旋转</button>
          <button class="sm"><svg><use href="#trim"/></svg>修剪<svg class="dn"><use href="#down"/></svg></button>
          <button class="sm" aria-label="删除"><svg><use href="#erase"/></svg></button>
          <button class="sm"><svg><use href="#copy"/></svg>复制</button>
          <button class="sm"><svg><use href="#mirror"/></svg>镜像</button>
          <button class="sm"><svg><use href="#fillet"/></svg>圆角<svg class="dn"><use href="#down"/></svg></button>
          <button class="sm" aria-label="分解"><svg><use href="#explode"/></svg></button>
          <button class="sm"><svg><use href="#stretch"/></svg>拉伸</button>
          <button class="sm"><svg><use href="#scale"/></svg>缩放</button>
          <button class="sm"><svg><use href="#array"/></svg>阵列<svg class="dn"><use href="#down"/></svg></button>
          <button class="sm" aria-label="偏移"><svg><use href="#offarc"/></svg></button>
        </div>
        <div class="foot">修改<svg class="dn lg"><use href="#down"/></svg></div>
      </div>
      <div class="panel p-ann">
        <div class="body">
          <button class="big"><svg viewBox="0 0 32 32"><text x="16" y="28" class="ltr">A</text></svg>文字<svg class="dn"><use href="#down"/></svg></button>
          <button class="big"><svg><use href="#dimbig"/></svg>标注</button>
          <div class="rows">
            <button class="sm"><svg><use href="#dimlin"/></svg>线性<svg class="dn"><use href="#down"/></svg></button>
            <button class="sm"><svg><use href="#leader"/></svg>引线<svg class="dn"><use href="#down"/></svg></button>
            <button class="sm"><svg><use href="#table"/></svg>表格</button>
          </div>
        </div>
        <div class="foot">注释<svg class="dn lg"><use href="#down"/></svg></div>
      </div>
      <div class="panel p-lay">
        <div class="body">
          <button class="big"><svg><use href="#layprop"/></svg>图层<br>特性</button>
          <div class="rows">
            <div class="combo layer">
              <svg class="ic"><use href="#bulbon"/></svg><svg class="ic"><use href="#sun"/></svg><svg class="ic"><use href="#unlock"/></svg><i class="sw"></i>
              <select aria-label="图层"><option>2粗实线</option></select><svg class="dn lg"><use href="#down"/></svg>
            </div>
            <div class="strip">
              <button class="sm" aria-label="关"><svg><use href="#layoff"/></svg></button><button class="sm" aria-label="隔离"><svg><use href="#layiso"/></svg></button><button class="sm" aria-label="冻结"><svg><use href="#layfrz"/></svg></button><button class="sm" aria-label="锁定"><svg><use href="#laylck"/></svg></button><button class="sm"><svg><use href="#laycur"/></svg>置为当前</button>
            </div>
            <div class="strip">
              <button class="sm" aria-label="打开所有"><svg><use href="#layon"/></svg></button><button class="sm" aria-label="取消隔离"><svg><use href="#layuniso"/></svg></button><button class="sm" aria-label="解冻"><svg><use href="#laythw"/></svg></button><button class="sm" aria-label="解锁"><svg><use href="#layunl"/></svg></button><button class="sm"><svg><use href="#laymat"/></svg>匹配图层</button>
            </div>
          </div>
        </div>
        <div class="foot">图层<svg class="dn lg"><use href="#down"/></svg></div>
      </div>
      <div class="panel p-blk">
        <div class="body">
          <button class="big"><svg><use href="#insert"/></svg>插入<svg class="dn"><use href="#down"/></svg></button>
          <div class="rows">
            <button class="sm"><svg><use href="#block"/></svg>创建</button>
            <button class="sm"><svg><use href="#bedit"/></svg>编辑</button>
            <button class="sm"><svg><use href="#battr"/></svg>编辑属性<svg class="dn"><use href="#down"/></svg></button>
          </div>
        </div>
        <div class="foot">块<svg class="dn lg"><use href="#down"/></svg></div>
      </div>
      <div class="panel p-prop">
        <div class="body">
          <button class="big"><svg><use href="#props"/></svg>特性<br>匹配</button>
          <div class="rows icons"><svg class="ic"><use href="#wheel"/></svg><svg class="ic"><use href="#lwt"/></svg><svg class="ic"><use href="#ltype"/></svg></div>
          <div class="rows grow">
            <div class="combo"><i class="sw bd"></i><select aria-label="颜色"><option>ByLayer</option></select><svg class="dn lg"><use href="#down"/></svg></div>
            <div class="combo"><i class="ln thick"></i><select aria-label="线宽"><option>0.30 毫米</option></select><svg class="dn lg"><use href="#down"/></svg></div>
            <div class="combo"><i class="ln"></i><select aria-label="线型"><option>ByLayer</option></select><svg class="dn lg"><use href="#down"/></svg></div>
          </div>
        </div>
        <div class="foot">特性<svg class="dn lg"><use href="#down"/></svg><svg class="launch" viewBox="0 0 9 9"><path d="M1 1l6 6M8 2v6H2"/></svg></div>
      </div>
      <div class="panel p-grp">
        <div class="body">
          <button class="big"><svg><use href="#group"/></svg>组</button>
          <div class="rows">
            <button class="sm" aria-label="组编辑"><svg><use href="#gedit"/></svg></button>
            <button class="sm" aria-label="添加删除"><svg><use href="#gaddrem"/></svg></button>
            <button class="sm hot" aria-label="启用组选择"><svg><use href="#gsel"/></svg></button>
          </div>
        </div>
        <div class="foot">组<svg class="dn lg"><use href="#down"/></svg></div>
      </div>
      <div class="panel p-util">
        <div class="body">
          <button class="big wide"><svg><use href="#measure"/></svg>测量<svg class="dn"><use href="#down"/></svg></button>
          <div class="rows">
            <button class="sm" aria-label="快速选择"><svg><use href="#qcalc"/></svg></button>
            <button class="sm" aria-label="点坐标"><svg><use href="#pid"/></svg></button>
            <button class="sm" aria-label="计算器"><svg><use href="#calc"/></svg></button>
          </div>
        </div>
        <div class="foot">实用工具<svg class="dn lg"><use href="#down"/></svg></div>
      </div>
      <div class="panel p-clip">
        <div class="body">
          <button class="big wide"><svg><use href="#paste"/></svg>粘贴<svg class="dn"><use href="#down"/></svg></button>
          <div class="rows">
            <button class="sm" aria-label="剪切"><svg><use href="#cut"/></svg></button>
            <button class="sm" aria-label="复制裁剪"><svg><use href="#copyclip"/></svg></button>
          </div>
        </div>
        <div class="foot">剪贴板</div>
      </div>
      <div class="panel p-view">
        <div class="body mid">
          <button class="big wide"><svg><use href="#base"/></svg>基点<svg class="dn"><use href="#down"/></svg></button>
        </div>
        <div class="foot">视图<svg class="dn lg"><use href="#down"/></svg><svg class="launch" viewBox="0 0 9 9"><path d="M1 1l6 6M8 2v6H2"/></svg></div>
      </div>
    </section>

    <nav class="doctabs">
      <button class="doc"><svg viewBox="0 0 204 37" preserveAspectRatio="none"><path d="M0 37c12-2 14-8 18-22C21 4 26 1 34 1h142c12 0 16 6 18 14l10 22z" fill="url(#gtab)" stroke="#707070"/></svg><span>开始</span></button>
      <button class="doc cur"><svg viewBox="0 0 204 37" preserveAspectRatio="none"><path d="M0 37c8-2 10-8 14-22C17 4 20 1 28 1h144c12 0 14 6 18 18 3 10 6 16 14 18z" fill="url(#gtabon)"/></svg><span>Drawing1*</span><b>✕</b></button>
      <button class="add" aria-label="新图形">+</button>
    </nav>

    <div class="toolrow">
      <div class="tb">
        <button aria-label="动态观察"><svg><use href="#orbit"/></svg></button>
        <button aria-label="漫游"><svg><use href="#fly"/></svg></button>
        <button aria-label="飞行"><svg><use href="#fly2"/></svg></button>
      </div>
      <div class="tb">
        <button aria-label="距离"><svg><use href="#mdist"/></svg></button>
        <button aria-label="半径"><svg><use href="#mrad"/></svg></button>
        <button aria-label="角度"><svg><use href="#mang"/></svg></button>
        <button aria-label="面积"><svg><use href="#marea"/></svg></button>
        <button aria-label="体积"><svg><use href="#mvol"/></svg></button>
      </div>
      <div class="tb">
        <button aria-label="二维线框"><svg><use href="#wire2d"/></svg></button><hr>
        <button aria-label="线框"><svg><use href="#wire"/></svg></button>
        <button aria-label="隐藏"><svg><use href="#hidden"/></svg></button>
        <button aria-label="真实"><svg><use href="#real"/></svg></button>
        <button aria-label="概念"><svg><use href="#concept"/></svg></button><hr>
        <button aria-label="视觉样式"><svg><use href="#vsman"/></svg></button>
      </div>
      <div class="tb">
        <button aria-label="UCS"><svg><use href="#ucs"/></svg></button>
        <button aria-label="命名UCS"><svg><use href="#ucsdlg"/></svg></button>
        <div class="drop world"><svg class="ic" viewBox="0 0 16 16"><circle cx="8" cy="8" r="7" fill="#dde6e6" stroke="#456"/><path d="M4 4l5 1-2 3 5 2-3 3M2 8h3" stroke="#234" fill="none"/></svg><select aria-label="UCS" disabled><option>世界</option></select><svg class="vv" viewBox="0 0 12 7"><path d="M1 1l5 5 5-5"/></svg></div>
      </div>
      <div class="tb">
        <button aria-label="平移"><svg><use href="#hand"/></svg></button>
        <button aria-label="缩放"><svg><use href="#zoom"/></svg></button>
        <button class="fly" aria-label="受约束的动态观察"><svg><use href="#orbit"/></svg></button>
        <button class="fly" aria-label="相机"><svg><use href="#camera"/></svg></button>
        <button class="fly" aria-label="漫游"><svg><use href="#foot"/></svg></button><hr>
        <div class="drop"><select aria-label="视图" disabled><option></option></select><svg class="vv" viewBox="0 0 12 7"><path d="M1 1l5 5 5-5"/></svg></div>
      </div>
      <div class="tb">
        <button aria-label="删除"><svg><use href="#erase"/></svg></button>
        <button aria-label="复制"><svg><use href="#copy"/></svg></button>
        <button aria-label="镜像"><svg><use href="#mirror"/></svg></button>
        <button aria-label="偏移"><svg><use href="#offset"/></svg></button>
        <button class="fly" aria-label="阵列"><svg><use href="#array"/></svg></button>
        <button aria-label="移动"><svg><use href="#move"/></svg></button>
        <button aria-label="旋转"><svg><use href="#rotate"/></svg></button>
        <button aria-label="缩放"><svg><use href="#scale"/></svg></button>
        <button aria-label="拉伸"><svg><use href="#stretch"/></svg></button>
        <button aria-label="修剪"><svg><use href="#trim"/></svg></button>
        <button aria-label="延伸"><svg><use href="#extend"/></svg></button>
        <button aria-label="打断于点"><svg><use href="#breakpt"/></svg></button>
        <button aria-label="打断"><svg><use href="#break"/></svg></button>
        <button aria-label="合并"><svg><use href="#join"/></svg></button>
        <button aria-label="倒角"><svg><use href="#chamfer"/></svg></button>
        <button aria-label="圆角"><svg><use href="#fillet"/></svg></button>
        <button aria-label="光顺曲线"><svg><use href="#blend"/></svg></button>
        <button aria-label="分解"><svg><use href="#explode"/></svg></button>
      </div>
    </div>

    <main class="work">
      <div class="tb col">
        <button aria-label="直线"><svg><use href="#line"/></svg></button>
        <button aria-label="构造线"><svg><use href="#xline"/></svg></button>
        <button aria-label="多段线"><svg><use href="#pline"/></svg></button>
        <button aria-label="多边形"><svg><use href="#polygon"/></svg></button>
        <button aria-label="矩形"><svg><use href="#rect"/></svg></button>
        <button aria-label="圆弧"><svg><use href="#arc"/></svg></button>
        <button aria-label="圆"><svg><use href="#circle"/></svg></button>
        <button aria-label="修订云线"><svg><use href="#cloud"/></svg></button>
        <button aria-label="样条曲线"><svg><use href="#spline"/></svg></button>
        <button aria-label="椭圆"><svg><use href="#ellipse"/></svg></button>
        <button aria-label="椭圆弧"><svg><use href="#earc"/></svg></button>
        <button class="fly" aria-label="插入块"><svg><use href="#insert"/></svg></button>
        <button aria-label="创建块"><svg><use href="#block"/></svg></button>
        <button aria-label="点"><svg><use href="#point"/></svg></button>
        <button aria-label="图案填充"><svg><use href="#hatch"/></svg></button>
        <button aria-label="渐变色"><svg><use href="#gradient"/></svg></button>
        <button aria-label="面域"><svg><use href="#region"/></svg></button>
        <button aria-label="表格"><svg><use href="#table"/></svg></button>
        <button aria-label="多行文字"><svg viewBox="0 0 32 32"><text x="16" y="28" class="ltr">A</text></svg></button>
        <button aria-label="添加选定对象"><svg><use href="#addsel"/></svg></button>
      </div>
      <div class="tb col">
        <button aria-label="线性"><svg><use href="#dimlin"/></svg></button>
        <button aria-label="对齐"><svg><use href="#dimali"/></svg></button>
        <button aria-label="弧长"><svg><use href="#dimarc"/></svg></button>
        <button aria-label="坐标"><svg viewBox="0 0 32 32"><path class="w" d="M12 10v20M20 18v12M8 27h22M8 12h4l8 6h10M26 12l-6 7M26 8v4"/><path class="b" d="M10 2h3v6h-3zM23 2l5 6M28 2l-5 6M1 11l3 3 3-3M4 14v3M2 24h3v6H2z"/></svg></button><hr>
        <button aria-label="半径"><svg><use href="#dimrad"/></svg></button>
        <button aria-label="折弯"><svg><use href="#dimjog"/></svg></button>
        <button aria-label="直径"><svg><use href="#dimdia"/></svg></button>
        <button aria-label="角度"><svg><use href="#dimang"/></svg></button><hr>
        <button aria-label="快速标注"><svg><use href="#qdim"/></svg></button>
        <button aria-label="基线"><svg><use href="#dimbase"/></svg></button>
        <button aria-label="连续"><svg><use href="#dimcont"/></svg></button>
        <button aria-label="等距"><svg><use href="#dimspace"/></svg></button>
        <button aria-label="折断"><svg><use href="#dimbreak"/></svg></button><hr>
        <button aria-label="公差"><svg viewBox="0 0 32 32"><path d="M1 6h30v21H1z" fill="#eee" stroke="#222"/><path d="M17 6v21M3 16h12M9 10v13" stroke="#222"/><circle cx="9" cy="16" r="4" fill="none" stroke="#222"/><text x="18" y="21" class="dk">.1</text></svg></button>
        <button aria-label="圆心标记"><svg><use href="#center"/></svg></button>
        <button aria-label="检验"><svg><use href="#inspect"/></svg></button>
        <button aria-label="折弯线性"><svg><use href="#jogline"/></svg></button><hr>
        <button aria-label="编辑标注"><svg><use href="#dimedit"/></svg></button>
        <button aria-label="编辑标注文字"><svg viewBox="0 0 32 32"><path class="w" d="M3 18v13M29 18v13M4 25h24"/><text x="16" y="19" class="ltrs">A</text></svg></button>
        <button aria-label="标注更新"><svg><use href="#dimupd"/></svg></button><hr>
        <button aria-label="标注样式"><svg><use href="#dimsty"/></svg></button>
      </div>

      <div class="canvas">
        <div class="vp">[−][俯视][二维线框]</div>

        <svg class="shape" viewBox="0 0 360 390">
          <path d="M17 308v65h65" fill="none" stroke="#b0b0b0" stroke-width="3"/>
          <path d="M17 172L357 10v363" fill="none" stroke="#000" stroke-width="3"/>
          <path d="M17 172v136c0 36 29 65 65 65h275" fill="none" stroke="#8fb4fb" stroke-width="7" stroke-linecap="round"/>
          <path d="M17 172v136c0 36 29 65 65 65h275" fill="none" stroke="#14264a" stroke-width="3"/>
          <path d="M101 373h8v8h-8z" fill="#fff" stroke="#000"/>
        </svg>

        <svg class="ucsicon" viewBox="0 0 76 76">
          <path d="M6 20v50M6 70h51M2 66h9v9H2z"/>
          <path d="M8 1l6 7 6-7M14 8v7M61 57l13 14M74 57L61 71"/>
        </svg>

        <div class="tb floatbar">
          <button class="fly" aria-label="几何约束"><svg><use href="#geo"/></svg></button>
          <button aria-label="自动约束"><svg><use href="#autoc"/></svg></button>
          <button aria-label="显示约束"><svg><use href="#cshow"/></svg></button>
          <button aria-label="全部显示"><svg><use href="#cshow"/></svg></button>
          <button aria-label="全部隐藏"><svg><use href="#chide"/></svg></button><hr>
          <button class="fly" aria-label="标注约束"><svg><use href="#dlock"/></svg></button>
          <button aria-label="显示动态约束"><svg><use href="#dshow"/></svg></button>
          <button aria-label="全部动态约束"><svg><use href="#dshow"/></svg></button>
          <button aria-label="帮助"><svg viewBox="0 0 32 32"><path d="M9 4c4-4 12-3 14 0 6 0 8 6 5 10 4 6 0 12-5 12-4 5-11 5-14 0C2 26 0 18 4 14 1 9 4 4 9 4z" fill="#e4e4e4" stroke="#999"/><text x="16" y="25" class="qm">?</text></svg></button><hr>
          <button aria-label="删除约束"><svg><use href="#delc"/></svg></button>
          <button aria-label="约束设置"><svg><use href="#cset"/></svg></button>
          <button aria-label="参数管理器"><svg viewBox="0 0 32 32"><text x="16" y="24" class="fx">fx</text></svg></button><hr>
          <span class="x">×</span>
        </div>

        <div class="viewcube">
          <svg viewBox="0 0 136 136">
            <circle cx="68" cy="68" r="54" fill="none" stroke="#fbfbfb" stroke-width="13"/>
            <path d="M42 42h51v51H42z" fill="#eee" stroke="#999"/>
            <path d="M52 52h32v32H52z" fill="#e2e4e9"/>
            <path d="M66 56v21M67 56v21M75 64h5M78 76h5" stroke="#999" fill="none"/><path d="M53 77h28M68 64h8" stroke="#c4c4c8"/>
          </svg>
          <span class="n">北</span><span class="w2">西</span><span class="e">东</span><span class="s2">南</span>
        </div>
        <button class="wcs">WCS <svg viewBox="0 0 10 6"><path d="M1 1h8L5 5z" fill="#fff" stroke="#b8b8c8"/></svg></button>

        <div class="navbar">
          <svg viewBox="0 0 34 214" fill="none" stroke="#d8d8d8">
            <circle cx="27" cy="7" r="3.500" fill="#ddd"/><path d="M7 32a11 11 0 0 1 11-11h10v11a11 11 0 0 1-21 0z"/><circle cx="17" cy="32" r="5.500"/><path d="M15 51h6l-3 3zM4 58h26"/>
            <path d="M12 85C8 80 5 76 6 73c3 0 4 2 6 4l-2-10c2-2 3 0 4 6V64c2-2 3 0 3 9l3-8c2-1 3 0 1 9l4-5c3 0 1 3 0 7-1 6-2 8-4 9z"/>
            <path d="M6 91l15 15M21 91L6 106M6 95v-4h4M17 91h4v4M6 102v4h4"/><circle cx="22" cy="106" r="5"/><path d="M25 109l5 5" stroke-width="3"/><path d="M15 121h6l-3 3z"/>
            <path d="M15 150v-15h-3l5-7 5 7h-3v15z"/><ellipse cx="17" cy="141" rx="11" ry="4"/><path d="M15 159h6l-3 3zM4 166h26"/>
            <path d="M6 171h6v6H6zM14 171h6v6h-6zM22 171h6v6h-6zM6 180h16v13H6zM11 183v7l6-4z"/><circle cx="27" cy="207" r="3.500" fill="#ddd"/>
          </svg>
        </div>

        <div class="cmd">
          <p class="h1">选择第一个对象或 [放弃(U)/多段线(P)/半径(R)/修剪(T)/多个(M)]: r</p>
          <p class="h2">指定圆角半径 &lt;0.0&gt;: 10</p>
          <p class="h3">选择第一个对象或 [放弃(U)/多段线(P)/半径(R)/修剪(T)/多个(M)]:</p>
          <div class="cmdline">
            <div class="handle"><i></i><button aria-label="关闭">✕</button><button aria-label="自定义"><svg><use href="#wrench"/></svg></button></div>
            <label class="prompt" for="cmdin"><svg class="ic"><use href="#fillet"/></svg><svg class="dn"><use href="#down"/></svg><b>FILLET</b><span>选择第二个对象，或按住 Shift 键选择对象以应用角点或 [<em>半径(<u>R</u>)</em>]: </span></label>
            <input id="cmdin" type="text">
          </div>
        </div>

        <svg class="mark" viewBox="0 0 410 210">
          <g class="wm">
            <ellipse cx="183" cy="37" rx="15" ry="20"/><ellipse cx="219" cy="41" rx="15" ry="19"/><ellipse cx="155" cy="66" rx="15" ry="19"/><ellipse cx="240" cy="74" rx="15" ry="19"/>
            <path d="M197 68c18 0 20 20 36 36 24 24 10 44-8 42-20-4-36-4-52 0-22 4-36-20-14-42 18-16 20-36 38-36z"/>
            <text x="3" y="142" class="wb">Bai</text><text x="168" y="134" class="wd">du</text><text x="258" y="140" class="wc">经验</text>
            <text x="8" y="196" class="wu">jingyan.baidu.com</text>
          </g>
        </svg>
      </div>
    </main>

    <footer class="status">
      <div class="cell"><button class="model">模型</button></div>
      <div class="cell"><button aria-label="栅格"><svg><use href="#grid"/></svg></button><button aria-label="捕捉"><svg><use href="#snap"/></svg></button><svg class="dn lg"><use href="#down"/></svg></div>
      <div class="cell"><button aria-label="动态输入"><svg><use href="#dyn"/></svg></button></div>
      <div class="cell"><button aria-label="正交"><svg><use href="#ortho"/></svg></button><button aria-label="极轴"><svg><use href="#polar"/></svg></button><svg class="dn lg"><use href="#down"/></svg><button aria-label="等轴测"><svg><use href="#iso"/></svg></button><svg class="dn lg"><use href="#down"/></svg></div>
      <div class="cell"><button aria-label="对象追踪"><svg><use href="#otrack"/></svg></button><button aria-label="对象捕捉"><svg><use href="#osnap"/></svg></button><svg class="dn lg"><use href="#down"/></svg></div>
      <div class="cell"><button aria-label="线宽"><svg><use href="#lwd"/></svg></button></div>
      <div class="cell"><button aria-label="三维捕捉"><svg><use href="#cube3"/></svg></button><svg class="dn lg"><use href="#down"/></svg></div>
      <div class="cell"><button aria-label="注释可见性"><svg><use href="#anno"/></svg></button><button aria-label="自动缩放"><svg><use href="#annob"/></svg></button><button aria-label="注释比例"><svg><use href="#annoc"/></svg></button><button class="ratio">1:1</button><svg class="dn lg"><use href="#down"/></svg></div>
      <div class="cell"><button aria-label="切换工作空间"><svg><use href="#sgear"/></svg></button><svg class="dn lg"><use href="#down"/></svg></div>
      <div class="cell"><button aria-label="注释监视器"><svg><use href="#plus"/></svg></button></div>
      <div class="cell"><button aria-label="隔离对象"><svg><use href="#shapes"/></svg></button></div>
      <div class="cell"><button aria-label="硬件加速"><svg><use href="#perf"/></svg></button></div>
      <div class="cell thin"></div>
      <div class="cell"><button aria-label="全屏"><svg><use href="#full"/></svg></button><button aria-label="自定义"><svg><use href="#burger"/></svg></button></div>
    </footer>
  </div>
</body>
</html>
```

FILE: styles.css
```css
* {
  box-sizing: border-box;
}
body {
  margin: 0;
  font-family: "Open Sans", "Noto Sans CJK SC", sans-serif;
  font-size: 18px;
  color: #fff;
  background: #5e5e5e;
}
button, select, input {
  font: inherit;
  color: inherit;
  background: none;
  border: 0;
  padding: 0;
  margin: 0;
  white-space: nowrap;
}
select {
  appearance: none;
  opacity: 1;
}
svg {
  display: block;
  flex: none;
}
.sprite {
  position: absolute;
  width: 0;
  height: 0;
}

/* icon strokes */
.w { fill: none; stroke: #f2f2f2; stroke-width: 1.3; }
.wf { fill: #f2f2f2; }
.b { fill: none; stroke: #69a3fa; stroke-width: 1.5; }
.bf { fill: #69a3fa; }
.p { fill: #55595f; stroke: #76acff; stroke-width: 1.4; }
.s { fill: none; stroke: #1e90ff; stroke-width: 2; }
.sg { fill: none; stroke: #c4c4c4; stroke-width: 2; }
.ltr, .ltrs, .qm, .fx { text-anchor: middle; }
.ltr { font: 36px "Open Sans", sans-serif; fill: #e6e6e6; }
.ltrs { font: 24px "Open Sans", sans-serif; fill: #e6e6e6; }
.dk { font: bold 14px "Liberation Sans", sans-serif; fill: #111; }
.qm { font: bold 26px "Liberation Sans", sans-serif; fill: #1c4a80; }
.fx { font: italic 28px "Liberation Serif", serif; fill: #ddd; }
.big svg, .tb svg { overflow: visible; }

.dn { width: 8px; height: 6px; }
.dn.lg { width: 11px; height: 8px; }
.ic { width: 26px; height: 26px; }

.app {
  display: flex;
  flex-direction: column;
  height: 100vh;
  border-bottom: 1px solid #aaa;
}

/* title bar */
.titlebar {
  position: relative;
  display: flex;
  align-items: stretch;
  height: 45px;
  padding: 8px 0 0 63px;
  background: #fff;
  border-top: 1px solid #2c303c;
}
.app-btn {
  position: absolute;
  left: 12px;
  top: 18px;
  width: 41px;
  height: 41px;
  border: 1px solid #111;
  background: linear-gradient(#c4c4c4, #7c7c7c);
  z-index: 2;
}
.qat, .info {
  display: flex;
  align-items: center;
  background: linear-gradient(#b0b0b0, #828282);
  border: 1px solid #666;
  border-top-width: 2px;
}
.qat {
  padding: 0 1px 0 7px;
}
.qat button {
  display: flex;
  justify-content: center;
  width: 36px;
}
.qat button svg, .info button svg {
  width: 26px;
  height: 24px;
}
.titlebar .dn { width: 8px; height: 6px; }
.titlebar .dn.lg { width: 11px; height: 8px; }
.qat .nar { width: 18px; }
.qat .more { width: 24px; }
.qat .more svg { width: 12px; height: 12px; }
.ws {
  display: flex;
  align-items: center;
  width: 271px;
  height: 34px;
  padding: 0 3px;
  background: linear-gradient(#666, #7c7c7c);
  border: 2px solid #333;
  color: #9b9b9b;
}
.ws select {
  flex: 1;
  padding-left: 4px;
  font-size: 19px;
}
.ws .dn { color: #fff; }
.caption {
  display: flex;
  flex: 0 0 433px;
  gap: 30px;
  padding-left: 29px;
  color: #000;
  font-size: 19px;
  line-height: 28px;
  white-space: nowrap;
}
.info {
  flex: 0 0 647px;
}
.info .nar {
  width: 20px;
  display: flex;
  justify-content: center;
}
.info .nar .ra { width: 6px; height: 12px; }
.info input {
  width: 270px;
  height: 33px;
  padding: 0 6px;
  background: #717171;
  border: 2px solid #333;
  font-size: 17px;
  font-style: italic;
}
.info input::placeholder { color: #c4c4c4; }
.info button {
  display: flex;
  align-items: center;
  margin-left: 4px;
}
.info .nar { margin: 0; }
.info .login { flex: 1; gap: 5px; padding-left: 4px; }
.login .dn { margin-left: auto; margin-right: 14px; }
.info .a360 { gap: 7px; padding: 0 15px 0 7px; border-right: 1px solid #aaa; }
.info .chev { padding: 0 10px 0 12px; }
.info .chev svg { width: 12px; height: 12px; }
.winctl {
  display: flex;
  gap: 54px;
  margin-left: auto;
  padding: 5px 27px 0 0;
  align-items: flex-start;
}
.winctl svg {
  width: 16px;
  height: 16px;
  fill: none;
  stroke: #888;
}

/* menus */
.menubar {
  display: flex;
  align-items: center;
  gap: 32px;
  height: 33px;
  padding: 0 7px 2px 80px;
  background: linear-gradient(#a4a4a4, #565656);
  border-top: 1px solid #3c3c3c;
  border-bottom: 2px solid #303030;
}
.mdi {
  width: 60px;
  height: 17px;
  margin-left: auto;
  fill: none;
  stroke: #2a2a2a;
  stroke-width: 2.5;
}
.tabs {
  display: flex;
  align-items: flex-end;
  height: 30px;
  padding-left: 10px;
  background: #535353;
  border-bottom: 2px solid #303030;
  color: #d4d4d4;
}
.tabs button {
  height: 26px;
  padding: 0 15px;
  line-height: 24px;
}
.tabs .lat { font-size: 19px; }
.tabs .on {
  padding: 0 13px;
  color: #fff;
  background: linear-gradient(#6e6e6e, #5c5c5c);
  border: 1px solid #3a3a3a;
  border-bottom: 0;
}
.tabs .min { padding: 4px 0 0 33px; }
.min svg { width: 34px; height: 14px; }

/* ribbon */
.ribbon {
  display: flex;
  height: 146px;
  padding-left: 5px;
  background: #5c5c5c;
}
.panel {
  display: flex;
  flex-direction: column;
  min-width: 0;
  border-right: 2px solid #3e3e3e;
}
.p-draw { flex: 317 1 0; }
.p-mod { flex: 340 1 0; }
.p-ann { flex: 234 1 0; }
.p-lay { flex: 380 1 0; }
.p-blk { flex: 202 1 0; }
.p-prop { flex: 324 1 0; }
.p-grp { flex: 102 1 0; }
.p-util { flex: 114 1 0; }
.p-clip { flex: 114 1 0; }
.p-view { flex: 89 1 0; border-right: 0; }
.body {
  display: flex;
  height: 118px;
  padding: 5px 2px 0;
}
.body.mid { justify-content: center; }
.p-ann .body { padding-left: 9px; }
.big {
  display: flex;
  flex-direction: column;
  align-items: center;
  width: 61px;
  padding-top: 4px;
  line-height: 24px;
}
.big.wide { width: 72px; }
.big > svg:first-child {
  width: 46px;
  height: 46px;
  margin-bottom: 7px;
}
.big .dn { margin-top: 3px; }
.rows {
  display: flex;
  flex-direction: column;
  padding-left: 6px;
}
.rows.grow { flex: 1; padding: 1px 0 0; }
.rows.icons { padding: 5px 2px 0 2px; gap: 10px; }
.sm {
  display: flex;
  align-items: center;
  gap: 6px;
  height: 36px;
}
.sm > svg:first-child {
  width: 26px;
  height: 26px;
}
.sm .dn { margin-left: 8px; }
.p-draw .rows { padding-left: 12px; }
.p-draw .sm .dn { margin-left: 4px; }
.modify {
  display: grid;
  grid-template-columns: 88px 88px 114px 36px;
  grid-auto-rows: 36px;
  padding-left: 9px;
}
.modify .sm .dn { margin-left: 12px; }
.strip { display: flex; }
.strip .sm:not(:last-child) { width: 36px; }
.p-lay .rows { flex: 1; padding-left: 0; padding-right: 0; }
.p-lay .strip { padding-left: 6px; }
.p-lay .big { width: 61px; }
.combo {
  display: flex;
  align-items: center;
  height: 33px;
  margin: 0 2px 2px 0;
  padding: 0 2px 0 8px;
  background: linear-gradient(#707070, #575757);
  border: 2px solid #333;
}
.combo select { flex: 1; min-width: 0; }
.layer { gap: 3px; margin: 1px 0 2px; padding-left: 2px; }
.layer .sw { margin: 0 5px 0 3px; }
.sw {
  width: 21px;
  height: 21px;
  background: #000;
}
.sw.bd { border: 1px solid #aaa; margin: 0 15px 0 9px; width: 23px; height: 24px; }
.ln {
  width: 88px;
  height: 2px;
  margin: 0 3px;
  background: #e0e0e0;
}
.ln.thick { height: 6px; background: #fff; }
.hot {
  background: linear-gradient(#7a9ad0, #4c70ac);
  border: 1px solid #2c3c5c;
  padding: 0 3px;
}
.p-grp .rows { padding-left: 0; }
.p-grp .sm { justify-content: center; width: 35px; }
.foot {
  position: relative;
  display: flex;
  align-items: center;
  justify-content: center;
  gap: 11px;
  flex: 1;
  margin: 0 2px;
  padding-bottom: 2px;
  background: linear-gradient(#545454, #484848);
  white-space: nowrap;
}
.launch {
  position: absolute;
  right: 2px;
  width: 9px;
  height: 9px;
  fill: none;
  stroke: #fff;
  stroke-width: 2;
}
.p-view .foot { justify-content: flex-start; padding-left: 4px; }

/* document tabs */
.doctabs {
  display: flex;
  height: 42px;
  padding: 4px 0 0 22px;
  background: #383838;
  border-top: 2px solid #808080;
}
.doc {
  position: relative;
  display: flex;
  align-items: center;
  width: 204px;
  height: 36px;
  padding: 0 30px 3px 28px;
  color: #b4b4b4;
}
.doc.cur { margin-left: -15px; padding-left: 24px; color: #fff; }
.doc svg {
  position: absolute;
  inset: 0;
  width: 100%;
  height: 100%;
}
.doc span, .doc b { position: relative; }
.doc b { margin-left: auto; color: #444; font-size: 16px; }
.add {
  width: 32px;
  height: 25px;
  margin-top: 6px;
  background: #505050;
  border: 1px solid #6a6a6a;
  border-radius: 4px 14px 2px 14px;
  color: #ccc;
  font-size: 24px;
  font-weight: bold;
  line-height: 20px;
}

/* toolbars */
.toolrow {
  display: flex;
  gap: 1px;
  height: 46px;
  padding: 2px 0 5px 2px;
  background: #5e5e5e;
}
.tb {
  display: flex;
  align-items: center;
  border: 1px solid #3a3a3a;
  background: linear-gradient(90deg, #505050 8px, #5e5e5e 8px);
}
.tb button {
  position: relative;
  display: flex;
  align-items: center;
  justify-content: center;
  width: 39px;
  height: 37px;
}
.tb button svg {
  width: 30px;
  height: 30px;
}
.tb hr {
  width: 2px;
  height: 34px;
  margin: 0 1px;
  border: 0;
  background: #9a9a9a;
}
/* dotted grip */
.tb::before {
  content: "";
  align-self: flex-start;
  width: 4px;
  height: 15px;
  margin: 4px 2px 0;
  background: repeating-linear-gradient(#222 0 1px, transparent 1px 3px);
}
.fly::after {
  content: "";
  position: absolute;
  right: 2px;
  bottom: 3px;
  border: 3px solid #111;
  border-top-color: transparent;
  border-left-color: transparent;
}
.drop {
  display: flex;
  align-items: center;
  align-self: flex-start;
  width: 140px;
  height: 24px;
  padding: 0 6px;
  background: #cbcbcb;
  color: #777;
}
.drop.world { width: 177px; font-size: 17px; margin-left: 4px; }
.drop .ic { width: 17px; height: 17px; margin-right: 4px; }
.drop select { flex: 1; color: #777; min-width: 0; }
.vv {
  width: 12px;
  height: 7px;
  fill: none;
  stroke: #aaa;
  stroke-width: 1.5;
}

/* work area */
.work {
  display: flex;
  flex: 1;
  min-height: 0;
  gap: 3px;
  padding-left: 1px;
  border-bottom: 2px solid #505050;
}
.col {
  flex-direction: column;
  align-self: flex-start;
  width: 41px;
  background: linear-gradient(#4c4c4c 8px, #5e5e5e 8px);
}
.col::before {
  width: 14px;
  height: 4px;
  margin: 2px 0 2px 4px;
  background: repeating-linear-gradient(90deg, #222 0 1px, transparent 1px 3px);
}
.col button { height: 38px; }
.col hr {
  width: 35px;
  height: 2px;
  margin: 2px 0;
  background: #e8e8e8;
}
.canvas {
  position: relative;
  flex: 1;
  background: #fff;
  overflow: hidden;
}
.col + .canvas { margin-left: 1px; }
.vp {
  padding: 2px 4px;
  color: #000;
  font-size: 13px;
  line-height: 20px;
}
.shape {
  position: absolute;
  left: 611px;
  top: 227px;
  width: 360px;
  height: 390px;
}
.ucsicon {
  position: absolute;
  left: 17px;
  bottom: 16px;
  width: 76px;
  height: 76px;
  fill: none;
  stroke: #111;
  stroke-width: 1.3;
}
.floatbar {
  position: absolute;
  left: 827px;
  top: 0;
  height: 39px;
  padding-left: 2px;
}
.floatbar .x {
  align-self: flex-start;
  width: 10px;
  font-size: 12px;
  line-height: 14px;
}
.viewcube {
  position: absolute;
  right: 15px;
  top: 14px;
  width: 136px;
  height: 136px;
}
.viewcube span {
  position: absolute;
  color: #b0b0b0;
  font-weight: bold;
  line-height: 20px;
}
.viewcube .n { left: 59px; top: 2px; }
.viewcube .s2 { left: 59px; bottom: 1px; }
.viewcube .w2 { left: 2px; top: 58px; }
.viewcube .e { right: 2px; top: 58px; }
.wcs {
  position: absolute;
  right: 58px;
  top: 168px;
  display: flex;
  align-items: center;
  gap: 5px;
  height: 17px;
  padding: 0 4px;
  background: #ececf5;
  border-radius: 5px;
  color: #909090;
  font: 12px "Liberation Sans", sans-serif;
}
.wcs svg { width: 10px; height: 6px; }
.navbar {
  position: absolute;
  right: 2px;
  top: 210px;
  background: #f6f6f6;
  border: 2px solid #c2c2c2;
  border-radius: 6px;
}
.navbar svg { width: 32px; height: 211px; }

/* command line */
.cmd {
  position: absolute;
  left: 405px;
  bottom: 0;
  display: flex;
  flex-direction: column;
  align-items: flex-start;
  font-family: "DejaVu Sans Mono", "Noto Sans CJK SC", monospace;
  font-size: 28px;
  line-height: 38px;
  white-space: pre;
}
.cmd p {
  margin: 0 0 8px 91px;
  padding: 0 4px;
  height: 36px;
  border-radius: 3px;
}
.cmd .h1 { background: linear-gradient(#a0a0a0, #919191); }
.cmd .h2 { background: linear-gradient(#8a8a8a, #7a7a7a); }
.cmd .h3 { background: linear-gradient(#767676, #646464); margin-bottom: 4px; }
.cmdline {
  display: flex;
  align-items: flex-end;
}
.handle {
  display: flex;
  align-items: center;
  gap: 10px;
  width: 81px;
  height: 40px;
  padding-left: 10px;
  background: linear-gradient(#858585, #3c3c3c);
  border: 2px solid #777;
  border-radius: 4px 0 0 4px;
  font-size: 20px;
  font-weight: bold;
}
.handle i { height: 30px; border-left: 2px dotted #bbb; }
.handle svg { width: 24px; height: 24px; }
.prompt {
  display: flex;
  align-items: center;
  height: 45px;
  padding: 2px 0 0 7px;
  background: #c8c8c8;
  border: 2px solid #777;
  border-right: 0;
  border-radius: 4px 0 0 0;
  color: #000;
  font-size: 29px;
}
.prompt .ic { width: 24px; height: 28px; }
.prompt .dn { color: #888; margin: 0 11px 0 2px; }
.prompt b { margin-right: 6px; font-size: 27px; }
.prompt em { font-style: normal; background: #d2d2d2; border-radius: 4px; }
.prompt u { text-decoration: none; color: #00e; }
.cmdline input {
  width: 122px;
  height: 45px;
  background: linear-gradient(#000, #000) 2px 50% / 2px 34px no-repeat #c8c8c8;
  border: 2px solid #777;
  border-left: 0;
  border-radius: 0 4px 4px 0;
}

/* corner logo */
.mark {
  position: absolute;
  left: 1609px;
  bottom: 0;
  width: 410px;
  height: 210px;
}
.wm {
  fill: #fff;
  fill-opacity: .85;
  stroke: #d2d2d2;
  stroke-width: 3;
  paint-order: stroke;
}
.wb { font: bold 92px "Liberation Sans", sans-serif; }
.wd { font: bold 56px "Liberation Sans", sans-serif; }
.wc { font: bold 68px "Noto Sans CJK SC", sans-serif; }
.wu { font: 46px "Open Sans", sans-serif; }

/* status bar */
.status {
  display: flex;
  justify-content: flex-end;
  gap: 3px;
  height: 44px;
  padding: 2px 0 4px;
  background: #383838;
}
.cell {
  display: flex;
  align-items: center;
  gap: 8px;
  padding: 0 5px;
  background: #515151;
  border: 1px solid #808080;
}
.cell button svg { width: 27px; height: 27px; }
.cell.thin { width: 4px; padding: 0; }
.model { font-weight: bold; font-size: 17px; }
```
